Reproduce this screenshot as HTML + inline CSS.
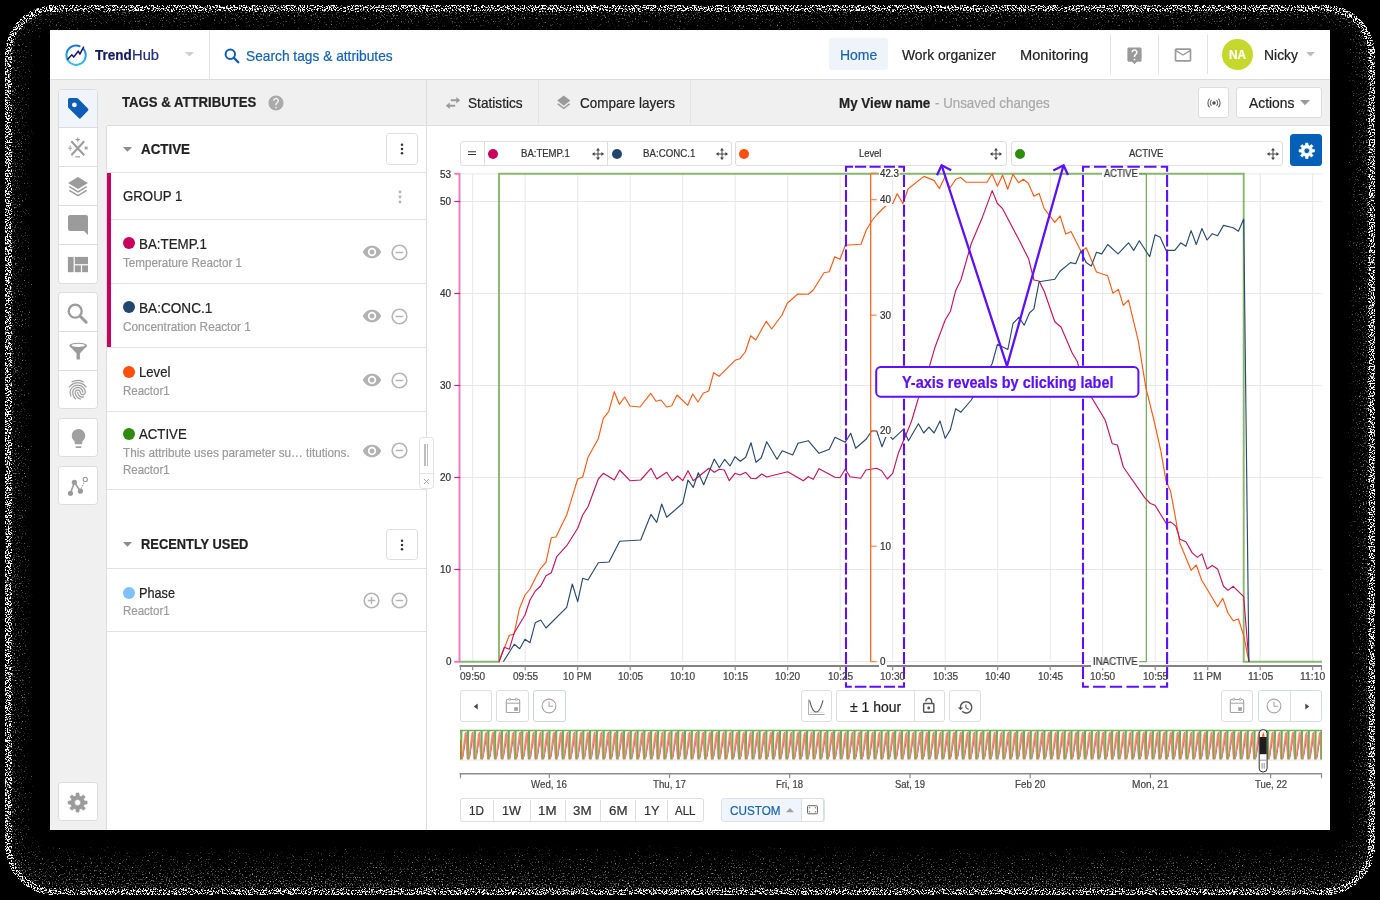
<!DOCTYPE html>
<html><head><meta charset="utf-8"><title>TrendHub</title><style>
html,body{margin:0;padding:0;background:#000;}
body{width:1380px;height:900px;overflow:hidden;position:relative;font-family:"Liberation Sans",sans-serif;}
.a{position:absolute;display:block;}
.t{position:absolute;white-space:nowrap;transform-origin:0 0;-webkit-text-stroke:0.22px currentColor;font-family:"Liberation Sans",sans-serif;}
.b{display:inline-block;width:0;height:0;}
#tx{position:absolute;left:0;top:0;width:1380px;height:900px;will-change:transform;}
</style></head><body>
<svg class="a" style="left:0.00px;top:0.00px" width="1380" height="900" viewBox="0 0 1380 900"><defs><filter id="sp1" x="0" y="0" width="1380" height="900" filterUnits="userSpaceOnUse" color-interpolation-filters="sRGB"><feTurbulence type="fractalNoise" baseFrequency="0.71" numOctaves="2" seed="7" result="t"/><feColorMatrix in="t" type="matrix" values="0 0 0 0 1  0 0 0 0 1  0 0 0 0 1  1 0 0 0 0" result="n"/><feComposite in="n" in2="SourceGraphic" operator="arithmetic" k1="0" k2="1" k3="1" k4="-1" result="c"/><feComponentTransfer in="c"><feFuncA type="linear" slope="12" intercept="0"/></feComponentTransfer></filter><filter id="sp2" x="0" y="0" width="1380" height="900" filterUnits="userSpaceOnUse" color-interpolation-filters="sRGB"><feTurbulence type="fractalNoise" baseFrequency="0.71" numOctaves="2" seed="7" result="t"/><feColorMatrix in="t" type="matrix" values="0 0 0 0 1  0 0 0 0 1  0 0 0 0 1  1 0 0 0 0" result="n"/><feComposite in="n" in2="SourceGraphic" operator="arithmetic" k1="0" k2="1" k3="1" k4="-1" result="c"/><feComponentTransfer in="c"><feFuncA type="linear" slope="2.3" intercept="0"/></feComponentTransfer></filter></defs><g filter="url(#sp1)"><path fill-rule="evenodd" fill="#fff" fill-opacity="0.569" d="M54.8 4.8H1325.2A50.0 50.0 0 0 1 1375.2 54.8V845.3A50.0 50.0 0 0 1 1325.2 895.3H54.8A50.0 50.0 0 0 1 4.8 845.3V54.8A50.0 50.0 0 0 1 54.8 4.8ZM54.8 5.8H1325.2A49.0 49.0 0 0 1 1374.2 54.8V845.3A49.0 49.0 0 0 1 1325.2 894.3H54.8A49.0 49.0 0 0 1 5.8 845.3V54.8A49.0 49.0 0 0 1 54.8 5.8Z"/><path fill-rule="evenodd" fill="#fff" fill-opacity="0.568" d="M54.8 5.8H1325.2A49.0 49.0 0 0 1 1374.2 54.8V845.3A49.0 49.0 0 0 1 1325.2 894.3H54.8A49.0 49.0 0 0 1 5.8 845.3V54.8A49.0 49.0 0 0 1 54.8 5.8ZM54.8 6.8H1325.2A48.0 48.0 0 0 1 1373.2 54.8V845.3A48.0 48.0 0 0 1 1325.2 893.3H54.8A48.0 48.0 0 0 1 6.8 845.3V54.8A48.0 48.0 0 0 1 54.8 6.8Z"/><path fill-rule="evenodd" fill="#fff" fill-opacity="0.566" d="M54.8 6.8H1325.2A48.0 48.0 0 0 1 1373.2 54.8V845.3A48.0 48.0 0 0 1 1325.2 893.3H54.8A48.0 48.0 0 0 1 6.8 845.3V54.8A48.0 48.0 0 0 1 54.8 6.8ZM54.8 7.8H1325.2A47.0 47.0 0 0 1 1372.2 54.8V845.3A47.0 47.0 0 0 1 1325.2 892.3H54.8A47.0 47.0 0 0 1 7.8 845.3V54.8A47.0 47.0 0 0 1 54.8 7.8Z"/><path fill-rule="evenodd" fill="#fff" fill-opacity="0.565" d="M54.8 7.8H1325.2A47.0 47.0 0 0 1 1372.2 54.8V845.3A47.0 47.0 0 0 1 1325.2 892.3H54.8A47.0 47.0 0 0 1 7.8 845.3V54.8A47.0 47.0 0 0 1 54.8 7.8ZM54.8 8.8H1325.2A46.0 46.0 0 0 1 1371.2 54.8V845.3A46.0 46.0 0 0 1 1325.2 891.3H54.8A46.0 46.0 0 0 1 8.8 845.3V54.8A46.0 46.0 0 0 1 54.8 8.8Z"/><path fill-rule="evenodd" fill="#fff" fill-opacity="0.563" d="M54.8 8.8H1325.2A46.0 46.0 0 0 1 1371.2 54.8V845.3A46.0 46.0 0 0 1 1325.2 891.3H54.8A46.0 46.0 0 0 1 8.8 845.3V54.8A46.0 46.0 0 0 1 54.8 8.8ZM54.8 9.8H1325.2A45.0 45.0 0 0 1 1370.2 54.8V845.3A45.0 45.0 0 0 1 1325.2 890.3H54.8A45.0 45.0 0 0 1 9.8 845.3V54.8A45.0 45.0 0 0 1 54.8 9.8Z"/><path fill-rule="evenodd" fill="#fff" fill-opacity="0.562" d="M54.8 9.8H1325.2A45.0 45.0 0 0 1 1370.2 54.8V845.3A45.0 45.0 0 0 1 1325.2 890.3H54.8A45.0 45.0 0 0 1 9.8 845.3V54.8A45.0 45.0 0 0 1 54.8 9.8ZM54.8 10.8H1325.2A44.0 44.0 0 0 1 1369.2 54.8V845.3A44.0 44.0 0 0 1 1325.2 889.3H54.8A44.0 44.0 0 0 1 10.8 845.3V54.8A44.0 44.0 0 0 1 54.8 10.8Z"/><path fill-rule="evenodd" fill="#fff" fill-opacity="0.561" d="M54.8 10.8H1325.2A44.0 44.0 0 0 1 1369.2 54.8V845.3A44.0 44.0 0 0 1 1325.2 889.3H54.8A44.0 44.0 0 0 1 10.8 845.3V54.8A44.0 44.0 0 0 1 54.8 10.8ZM54.8 11.8H1325.2A43.0 43.0 0 0 1 1368.2 54.8V845.3A43.0 43.0 0 0 1 1325.2 888.3H54.8A43.0 43.0 0 0 1 11.8 845.3V54.8A43.0 43.0 0 0 1 54.8 11.8Z"/></g><g filter="url(#sp2)"><path fill-rule="evenodd" fill="#fff" fill-opacity="0.513" d="M54.8 11.8H1325.2A43.0 43.0 0 0 1 1368.2 54.8V845.3A43.0 43.0 0 0 1 1325.2 888.3H54.8A43.0 43.0 0 0 1 11.8 845.3V54.8A43.0 43.0 0 0 1 54.8 11.8ZM54.8 12.8H1325.2A42.0 42.0 0 0 1 1367.2 54.8V844.3A42.0 42.0 0 0 1 1325.2 886.3H54.8A42.0 42.0 0 0 1 12.8 844.3V54.8A42.0 42.0 0 0 1 54.8 12.8Z"/><path fill-rule="evenodd" fill="#fff" fill-opacity="0.500" d="M54.8 12.8H1325.2A42.0 42.0 0 0 1 1367.2 54.8V844.3A42.0 42.0 0 0 1 1325.2 886.3H54.8A42.0 42.0 0 0 1 12.8 844.3V54.8A42.0 42.0 0 0 1 54.8 12.8ZM54.8 13.8H1325.2A41.0 41.0 0 0 1 1366.2 54.8V843.3A41.0 41.0 0 0 1 1325.2 884.3H54.8A41.0 41.0 0 0 1 13.8 843.3V54.8A41.0 41.0 0 0 1 54.8 13.8Z"/><path fill-rule="evenodd" fill="#fff" fill-opacity="0.487" d="M54.8 13.8H1325.2A41.0 41.0 0 0 1 1366.2 54.8V843.3A41.0 41.0 0 0 1 1325.2 884.3H54.8A41.0 41.0 0 0 1 13.8 843.3V54.8A41.0 41.0 0 0 1 54.8 13.8ZM54.8 14.8H1325.2A40.0 40.0 0 0 1 1365.2 54.8V842.3A40.0 40.0 0 0 1 1325.2 882.3H54.8A40.0 40.0 0 0 1 14.8 842.3V54.8A40.0 40.0 0 0 1 54.8 14.8Z"/><path fill-rule="evenodd" fill="#fff" fill-opacity="0.476" d="M54.8 14.8H1325.2A40.0 40.0 0 0 1 1365.2 54.8V842.3A40.0 40.0 0 0 1 1325.2 882.3H54.8A40.0 40.0 0 0 1 14.8 842.3V54.8A40.0 40.0 0 0 1 54.8 14.8ZM54.8 15.8H1325.2A39.0 39.0 0 0 1 1364.2 54.8V841.3A39.0 39.0 0 0 1 1325.2 880.3H54.8A39.0 39.0 0 0 1 15.8 841.3V54.8A39.0 39.0 0 0 1 54.8 15.8Z"/><path fill-rule="evenodd" fill="#fff" fill-opacity="0.467" d="M54.8 15.8H1325.2A39.0 39.0 0 0 1 1364.2 54.8V841.3A39.0 39.0 0 0 1 1325.2 880.3H54.8A39.0 39.0 0 0 1 15.8 841.3V54.8A39.0 39.0 0 0 1 54.8 15.8ZM54.8 16.8H1325.2A38.0 38.0 0 0 1 1363.2 54.8V840.3A38.0 38.0 0 0 1 1325.2 878.3H54.8A38.0 38.0 0 0 1 16.8 840.3V54.8A38.0 38.0 0 0 1 54.8 16.8Z"/><path fill-rule="evenodd" fill="#fff" fill-opacity="0.459" d="M54.8 16.8H1325.2A38.0 38.0 0 0 1 1363.2 54.8V840.3A38.0 38.0 0 0 1 1325.2 878.3H54.8A38.0 38.0 0 0 1 16.8 840.3V54.8A38.0 38.0 0 0 1 54.8 16.8ZM54.8 17.8H1325.2A37.0 37.0 0 0 1 1362.2 54.8V839.3A37.0 37.0 0 0 1 1325.2 876.3H54.8A37.0 37.0 0 0 1 17.8 839.3V54.8A37.0 37.0 0 0 1 54.8 17.8Z"/><path fill-rule="evenodd" fill="#fff" fill-opacity="0.451" d="M54.8 17.8H1325.2A37.0 37.0 0 0 1 1362.2 54.8V839.3A37.0 37.0 0 0 1 1325.2 876.3H54.8A37.0 37.0 0 0 1 17.8 839.3V54.8A37.0 37.0 0 0 1 54.8 17.8ZM54.8 18.8H1325.2A36.0 36.0 0 0 1 1361.2 54.8V838.3A36.0 36.0 0 0 1 1325.2 874.3H54.8A36.0 36.0 0 0 1 18.8 838.3V54.8A36.0 36.0 0 0 1 54.8 18.8Z"/><path fill-rule="evenodd" fill="#fff" fill-opacity="0.443" d="M54.8 18.8H1325.2A36.0 36.0 0 0 1 1361.2 54.8V838.3A36.0 36.0 0 0 1 1325.2 874.3H54.8A36.0 36.0 0 0 1 18.8 838.3V54.8A36.0 36.0 0 0 1 54.8 18.8ZM54.8 19.8H1325.2A35.0 35.0 0 0 1 1360.2 54.8V837.3A35.0 35.0 0 0 1 1325.2 872.3H54.8A35.0 35.0 0 0 1 19.8 837.3V54.8A35.0 35.0 0 0 1 54.8 19.8Z"/><path fill-rule="evenodd" fill="#fff" fill-opacity="0.434" d="M54.8 19.8H1325.2A35.0 35.0 0 0 1 1360.2 54.8V837.3A35.0 35.0 0 0 1 1325.2 872.3H54.8A35.0 35.0 0 0 1 19.8 837.3V54.8A35.0 35.0 0 0 1 54.8 19.8ZM54.8 20.8H1325.2A34.0 34.0 0 0 1 1359.2 54.8V836.3A34.0 34.0 0 0 1 1325.2 870.3H54.8A34.0 34.0 0 0 1 20.8 836.3V54.8A34.0 34.0 0 0 1 54.8 20.8Z"/><path fill-rule="evenodd" fill="#fff" fill-opacity="0.426" d="M54.8 20.8H1325.2A34.0 34.0 0 0 1 1359.2 54.8V836.3A34.0 34.0 0 0 1 1325.2 870.3H54.8A34.0 34.0 0 0 1 20.8 836.3V54.8A34.0 34.0 0 0 1 54.8 20.8ZM54.8 21.8H1325.2A33.0 33.0 0 0 1 1358.2 54.8V835.3A33.0 33.0 0 0 1 1325.2 868.3H54.8A33.0 33.0 0 0 1 21.8 835.3V54.8A33.0 33.0 0 0 1 54.8 21.8Z"/><path fill-rule="evenodd" fill="#fff" fill-opacity="0.417" d="M54.8 21.8H1325.2A33.0 33.0 0 0 1 1358.2 54.8V835.3A33.0 33.0 0 0 1 1325.2 868.3H54.8A33.0 33.0 0 0 1 21.8 835.3V54.8A33.0 33.0 0 0 1 54.8 21.8ZM54.8 22.8H1325.2A32.0 32.0 0 0 1 1357.2 54.8V834.3A32.0 32.0 0 0 1 1325.2 866.3H54.8A32.0 32.0 0 0 1 22.8 834.3V54.8A32.0 32.0 0 0 1 54.8 22.8Z"/><path fill-rule="evenodd" fill="#fff" fill-opacity="0.409" d="M54.8 22.8H1325.2A32.0 32.0 0 0 1 1357.2 54.8V834.3A32.0 32.0 0 0 1 1325.2 866.3H54.8A32.0 32.0 0 0 1 22.8 834.3V54.8A32.0 32.0 0 0 1 54.8 22.8ZM54.8 23.8H1325.2A31.0 31.0 0 0 1 1356.2 54.8V833.3A31.0 31.0 0 0 1 1325.2 864.3H54.8A31.0 31.0 0 0 1 23.8 833.3V54.8A31.0 31.0 0 0 1 54.8 23.8Z"/><path fill-rule="evenodd" fill="#fff" fill-opacity="0.401" d="M54.8 23.8H1325.2A31.0 31.0 0 0 1 1356.2 54.8V833.3A31.0 31.0 0 0 1 1325.2 864.3H54.8A31.0 31.0 0 0 1 23.8 833.3V54.8A31.0 31.0 0 0 1 54.8 23.8ZM54.8 24.8H1325.2A30.0 30.0 0 0 1 1355.2 54.8V832.3A30.0 30.0 0 0 1 1325.2 862.3H54.8A30.0 30.0 0 0 1 24.8 832.3V54.8A30.0 30.0 0 0 1 54.8 24.8Z"/><path fill-rule="evenodd" fill="#fff" fill-opacity="0.393" d="M54.8 24.8H1325.2A30.0 30.0 0 0 1 1355.2 54.8V832.3A30.0 30.0 0 0 1 1325.2 862.3H54.8A30.0 30.0 0 0 1 24.8 832.3V54.8A30.0 30.0 0 0 1 54.8 24.8ZM54.8 25.8H1325.2A29.0 29.0 0 0 1 1354.2 54.8V831.3A29.0 29.0 0 0 1 1325.2 860.3H54.8A29.0 29.0 0 0 1 25.8 831.3V54.8A29.0 29.0 0 0 1 54.8 25.8Z"/><path fill-rule="evenodd" fill="#fff" fill-opacity="0.384" d="M54.8 25.8H1325.2A29.0 29.0 0 0 1 1354.2 54.8V831.3A29.0 29.0 0 0 1 1325.2 860.3H54.8A29.0 29.0 0 0 1 25.8 831.3V54.8A29.0 29.0 0 0 1 54.8 25.8ZM54.8 26.8H1325.2A28.0 28.0 0 0 1 1353.2 54.8V830.3A28.0 28.0 0 0 1 1325.2 858.3H54.8A28.0 28.0 0 0 1 26.8 830.3V54.8A28.0 28.0 0 0 1 54.8 26.8Z"/><path fill-rule="evenodd" fill="#fff" fill-opacity="0.373" d="M54.8 26.8H1325.2A28.0 28.0 0 0 1 1353.2 54.8V830.3A28.0 28.0 0 0 1 1325.2 858.3H54.8A28.0 28.0 0 0 1 26.8 830.3V54.8A28.0 28.0 0 0 1 54.8 26.8ZM54.8 27.8H1325.2A27.0 27.0 0 0 1 1352.2 54.8V829.3A27.0 27.0 0 0 1 1325.2 856.3H54.8A27.0 27.0 0 0 1 27.8 829.3V54.8A27.0 27.0 0 0 1 54.8 27.8Z"/><path fill-rule="evenodd" fill="#fff" fill-opacity="0.360" d="M54.8 27.8H1325.2A27.0 27.0 0 0 1 1352.2 54.8V829.3A27.0 27.0 0 0 1 1325.2 856.3H54.8A27.0 27.0 0 0 1 27.8 829.3V54.8A27.0 27.0 0 0 1 54.8 27.8ZM54.8 28.8H1325.2A26.0 26.0 0 0 1 1351.2 54.8V828.3A26.0 26.0 0 0 1 1325.2 854.3H54.8A26.0 26.0 0 0 1 28.8 828.3V54.8A26.0 26.0 0 0 1 54.8 28.8Z"/><path fill-rule="evenodd" fill="#fff" fill-opacity="0.347" d="M54.8 28.8H1325.2A26.0 26.0 0 0 1 1351.2 54.8V828.3A26.0 26.0 0 0 1 1325.2 854.3H54.8A26.0 26.0 0 0 1 28.8 828.3V54.8A26.0 26.0 0 0 1 54.8 28.8ZM54.8 29.8H1325.2A25.0 25.0 0 0 1 1350.2 54.8V827.3A25.0 25.0 0 0 1 1325.2 852.3H54.8A25.0 25.0 0 0 1 29.8 827.3V54.8A25.0 25.0 0 0 1 54.8 29.8Z"/><path fill-rule="evenodd" fill="#fff" fill-opacity="0.333" d="M54.8 29.8H1325.2A25.0 25.0 0 0 1 1350.2 54.8V827.3A25.0 25.0 0 0 1 1325.2 852.3H54.8A25.0 25.0 0 0 1 29.8 827.3V54.8A25.0 25.0 0 0 1 54.8 29.8ZM54.8 30.8H1325.2A24.0 24.0 0 0 1 1349.2 54.8V826.3A24.0 24.0 0 0 1 1325.2 850.3H54.8A24.0 24.0 0 0 1 30.8 826.3V54.8A24.0 24.0 0 0 1 54.8 30.8Z"/><path fill-rule="evenodd" fill="#fff" fill-opacity="0.320" d="M54.8 30.8H1325.2A24.0 24.0 0 0 1 1349.2 54.8V826.3A24.0 24.0 0 0 1 1325.2 850.3H54.8A24.0 24.0 0 0 1 30.8 826.3V54.8A24.0 24.0 0 0 1 54.8 30.8ZM54.8 31.8H1325.2A23.0 23.0 0 0 1 1348.2 54.8V825.3A23.0 23.0 0 0 1 1325.2 848.3H54.8A23.0 23.0 0 0 1 31.8 825.3V54.8A23.0 23.0 0 0 1 54.8 31.8Z"/><path fill-rule="evenodd" fill="#fff" fill-opacity="0.307" d="M54.8 31.8H1325.2A23.0 23.0 0 0 1 1348.2 54.8V825.3A23.0 23.0 0 0 1 1325.2 848.3H54.8A23.0 23.0 0 0 1 31.8 825.3V54.8A23.0 23.0 0 0 1 54.8 31.8ZM54.8 32.8H1325.2A22.0 22.0 0 0 1 1347.2 54.8V824.3A22.0 22.0 0 0 1 1325.2 846.3H54.8A22.0 22.0 0 0 1 32.8 824.3V54.8A22.0 22.0 0 0 1 54.8 32.8Z"/></g></svg>
<div class="a" style="left:50.00px;top:30.00px;width:1280.00px;height:800.00px;background:#ffffff;"></div>
<div class="a" style="left:50.00px;top:80.00px;width:377.00px;height:750.00px;background:#f0f0f0;"></div>
<div class="a" style="left:427.00px;top:80.00px;width:903.00px;height:45.50px;background:#f0f0f0;"></div>
<div class="a" style="left:107.00px;top:126.00px;width:319.50px;height:704.00px;background:#ffffff;"></div>
<div class="a" style="left:50.00px;top:79.00px;width:1280.00px;height:1px;background:#dcdcdc"></div>
<div class="a" style="left:209.00px;top:30.00px;width:1px;height:49.50px;background:#e2e2e2"></div>
<div class="a" style="left:107.00px;top:125.00px;width:1223.00px;height:1px;background:#dcdcdc"></div>
<div class="a" style="left:106.30px;top:126.00px;width:1px;height:704.00px;background:#dcdcdc"></div>
<div class="a" style="left:426.30px;top:80.00px;width:1px;height:750.00px;background:#dcdcdc"></div>
<div class="a" style="left:537.50px;top:80.00px;width:1px;height:45.50px;background:#e4e4e4"></div>
<div class="a" style="left:689.50px;top:80.00px;width:1px;height:45.50px;background:#e4e4e4"></div>
<svg class="a" style="left:62.40px;top:41.50px" width="27" height="27" viewBox="0 0 28 28"><defs><linearGradient id="lg" x1="0" y1="0" x2="0" y2="1"><stop offset="0" stop-color="#1b75d0"/><stop offset="1" stop-color="#2fc0ea"/></linearGradient></defs>
<path d="M22.2 7.2 A10 10 0 1 1 18.3 4.4" fill="none" stroke="url(#lg)" stroke-width="2.1" stroke-linecap="round"/>
<path d="M5.6 18.2 L10.2 13.2 L12.2 15.6 L16.8 9.6 L18.6 12.4 L22.6 4.8" fill="none" stroke="#1b1464" stroke-width="1.5" stroke-linejoin="miter"/></svg>
<svg class="a" style="left:184.50px;top:52.00px" width="9" height="5" viewBox="0 0 9 5"><path d="M0 0H9L4.5 4.6z" fill="#cfcfcf"/></svg>
<svg class="a" style="left:224.20px;top:47.60px" width="16" height="16" viewBox="0 0 16 16"><circle cx="6.300" cy="6.300" r="4.700" fill="none" stroke="#0d5cb6" stroke-width="2"/><path d="M9.900 9.900L14.300 14.300" stroke="#0d5cb6" stroke-width="2.300" stroke-linecap="round"/></svg>
<div class="a" style="left:829.00px;top:38.30px;width:59.30px;height:31.70px;background:#eff4fb;border-radius:3px;"></div>
<div class="a" style="left:1110.20px;top:34.60px;width:1px;height:39.40px;background:#e2e2e2"></div>
<div class="a" style="left:1158.10px;top:34.60px;width:1px;height:39.40px;background:#e2e2e2"></div>
<div class="a" style="left:1207.10px;top:34.60px;width:1px;height:39.40px;background:#e2e2e2"></div>
<svg class="a" style="left:1125.00px;top:45.70px" width="19" height="19" viewBox="0 0 24 24"><path fill="#9a9a9a"  d="M19 2H5c-1.11 0-2 .9-2 2v14c0 1.1.89 2 2 2h4l3 3 3-3h4c1.1 0 2-.9 2-2V4c0-1.1-.9-2-2-2zm-6 16h-2v-2h2v2zm2.07-7.75l-.9.92C13.45 11.9 13 12.5 13 14h-2v-.5c0-1.1.45-2.1 1.17-2.83l1.24-1.26c.37-.36.59-.86.59-1.41 0-1.1-.9-2-2-2s-2 .9-2 2H8c0-2.21 1.79-4 4-4s4 1.79 4 4c0 .88-.36 1.68-.93 2.25z"/></svg>
<svg class="a" style="left:1173.20px;top:44.60px" width="20" height="20" viewBox="0 0 24 24"><path fill="#9a9a9a"  d="M20 4H4c-1.1 0-1.99.9-1.99 2L2 18c0 1.1.9 2 2 2h16c1.1 0 2-.9 2-2V6c0-1.1-.9-2-2-2zm0 14H4V8l8 5 8-5v10zm-8-7L4 6h16l-8 5z"/></svg>
<div class="a" style="left:1222.40px;top:39.10px;width:30.60px;height:30.60px;border-radius:50%;background:#c5d92d"></div>
<svg class="a" style="left:1305.70px;top:52.40px" width="9" height="5" viewBox="0 0 9 5"><path d="M0 0H9L4.5 4.6z" fill="#bdbdbd"/></svg>
<svg class="a" style="left:444.50px;top:95.50px" width="16" height="14" viewBox="0 0 16 14"><path d="M15.200 4.200L11.300 .9V3.200H5.800V5.200H11.300V7.500zM.8 9.800L4.700 6.500V8.800H10.200V10.800H4.700V13.100z" fill="#9a9a9a"/></svg>
<svg class="a" style="left:554.55px;top:93.55px" width="17.5" height="17.5" viewBox="0 0 24 24"><path fill="#9a9a9a"  d="M11.99 18.54l-7.37-5.73L3 14.07l9 7 9-7-1.63-1.27-7.38 5.74zM12 16l7.36-5.73L21 9l-9-7-9 7 1.63 1.27L12 16z"/></svg>
<div class="a" style="left:1198.30px;top:86.90px;width:30.50px;height:31.10px;background:#ffffff;border:1px solid #dddddd;box-sizing:border-box;border-radius:3px;"></div>
<svg class="a" style="left:1205.50px;top:96.50px" width="16" height="12" viewBox="0 0 16 12"><circle cx="8" cy="6" r="1.800" fill="#555"/>
<path d="M5.500 3.200 A4 4 0 0 0 5.500 8.800 M10.500 3.200 A4 4 0 0 1 10.500 8.800" fill="none" stroke="#666" stroke-width="1.150"/>
<path d="M3.600 1.700 A6.300 6.300 0 0 0 3.600 10.300 M12.400 1.700 A6.300 6.300 0 0 1 12.400 10.300" fill="none" stroke="#666" stroke-width="1.150"/></svg>
<div class="a" style="left:1236.00px;top:86.90px;width:85.50px;height:31.10px;background:#ffffff;border:1px solid #dddddd;box-sizing:border-box;border-radius:3px;"></div>
<svg class="a" style="left:1300.00px;top:100.20px" width="10" height="5.5" viewBox="0 0 10 5.5"><path d="M0 0H10L5 5.2z" fill="#9a9a9a"/></svg>
<div class="a" style="left:58.20px;top:88.60px;width:39.40px;height:195.00px;background:#ffffff;border:1px solid #dcdcdc;box-sizing:border-box;border-radius:3.5px;"></div>
<div class="a" style="left:59.00px;top:127.10px;width:38.00px;height:1px;background:#dcdcdc"></div>
<div class="a" style="left:59.00px;top:166.10px;width:38.00px;height:1px;background:#dcdcdc"></div>
<div class="a" style="left:59.00px;top:205.10px;width:38.00px;height:1px;background:#dcdcdc"></div>
<div class="a" style="left:59.00px;top:244.10px;width:38.00px;height:1px;background:#dcdcdc"></div>
<div class="a" style="left:59.20px;top:89.60px;width:37.40px;height:37.60px;background:#f0f5fb;border-radius:2.5px;"></div>
<div class="a" style="left:58.20px;top:292.00px;width:39.40px;height:117.30px;background:#ffffff;border:1px solid #dcdcdc;box-sizing:border-box;border-radius:3.5px;"></div>
<div class="a" style="left:59.00px;top:330.60px;width:38.00px;height:1px;background:#dcdcdc"></div>
<div class="a" style="left:59.00px;top:369.70px;width:38.00px;height:1px;background:#dcdcdc"></div>
<div class="a" style="left:58.20px;top:418.30px;width:39.40px;height:39.20px;background:#ffffff;border:1px solid #dcdcdc;box-sizing:border-box;border-radius:3.5px;"></div>
<div class="a" style="left:58.20px;top:466.30px;width:39.40px;height:39.10px;background:#ffffff;border:1px solid #dcdcdc;box-sizing:border-box;border-radius:3.5px;"></div>
<div class="a" style="left:58.20px;top:782.30px;width:39.40px;height:39.20px;background:#ffffff;border:1px solid #dcdcdc;box-sizing:border-box;border-radius:3.5px;"></div>
<svg class="a" style="left:68.00px;top:98.00px" width="22" height="22" viewBox="0 0 22 22"><path fill-rule="evenodd" fill="#0d5cb6" d="M1.600 0H8.600Q9.400 0 10 .6L19.900 10.500Q21 11.600 19.900 12.800L12.900 20.100Q11.800 21.200 10.700 20.100L.6 10Q0 9.400 0 8.600V1.600Q0 0 1.600 0zM6.400 4.500A2.400 2.400 0 1 0 6.400 9.300A2.400 2.400 0 1 0 6.400 4.500z"/></svg>
<svg class="a" style="left:66.20px;top:135.00px" width="24" height="25" viewBox="0 0 24 25"><g stroke="#9b9b9b" fill="none" stroke-width="2" stroke-linecap="butt"><path d="M5.300 6.300L18.200 20.200M18.200 6.300L5.300 20.200"/></g>
<g stroke="#9b9b9b" stroke-width="1.250" fill="none"><path d="M11.800 2.600v4.200M9.700 4.700h4.200M9.400 21.800h4.600M2.300 13.200h3.600M18.800 11.600l2.700 2.700M21.500 11.600L18.800 14.300"/></g><circle cx="4.100" cy="11.300" r=".75" fill="#9b9b9b"/><circle cx="4.100" cy="15.100" r=".75" fill="#9b9b9b"/></svg>
<svg class="a" style="left:66.90px;top:176.00px" width="22" height="22" viewBox="0 0 22 22"><path d="M11 1L21 7L11 13L1 7z" fill="#9b9b9b"/><path d="M2.300 10.700L11 15.900L19.700 10.700M2.300 14.400L11 19.600L19.700 14.400" fill="none" stroke="#9b9b9b" stroke-width="1.500"/></svg>
<svg class="a" style="left:65.90px;top:213.20px" width="24" height="24" viewBox="0 0 24 24"><path fill="#9b9b9b"  d="M21.99 4c0-1.1-.89-2-1.99-2H4c-1.1 0-2 .9-2 2v12c0 1.1.9 2 2 2h14l4 4-.01-18z"/></svg>
<svg class="a" style="left:67.00px;top:256.00px" width="22" height="17" viewBox="0 0 22 17"><rect x=".9" y=".9" width="5.700" height="15.300" fill="#9b9b9b"/><rect x="7.800" y=".9" width="13.200" height="7.300" fill="#9b9b9b"/><rect x="7.800" y="9.400" width="6.100" height="6.800" fill="#9b9b9b"/><rect x="15.100" y="9.400" width="5.900" height="6.800" fill="#9b9b9b"/></svg>
<svg class="a" style="left:65.90px;top:301.50px" width="23" height="23" viewBox="0 0 23 23"><circle cx="9.200" cy="9.200" r="6.500" fill="none" stroke="#9b9b9b" stroke-width="2.300"/><path d="M14.200 14.200L20.200 20.200" stroke="#9b9b9b" stroke-width="3" stroke-linecap="round"/></svg>
<svg class="a" style="left:67.20px;top:340.60px" width="23" height="22" viewBox="0 0 23 22"><path d="M2.400 4.800L9.500 12.600V18.400H12.900V12.600L20 4.800z" fill="#9b9b9b"/><ellipse cx="11.200" cy="4.700" rx="8.800" ry="3" fill="#9b9b9b"/><ellipse cx="11.200" cy="4.400" rx="6.700" ry="1.550" fill="#ffffff"/></svg>
<svg class="a" style="left:66.15px;top:378.25px" width="23.5" height="23.5" viewBox="0 0 24 24"><path fill="#9b9b9b" stroke="#9b9b9b" stroke-width=".25" d="M17.81 4.47c-.08 0-.16-.02-.23-.06C15.66 3.42 14 3 12.01 3c-1.98 0-3.86.47-5.57 1.41-.24.13-.54.04-.68-.2-.13-.24-.04-.55.2-.68C7.82 2.52 9.86 2 12.01 2c2.13 0 3.99.47 6.03 1.52.25.13.34.43.21.67-.09.18-.26.28-.44.28zM3.5 9.72c-.1 0-.2-.03-.29-.09-.23-.16-.28-.47-.12-.7.99-1.4 2.25-2.5 3.75-3.27C9.98 4.04 14 4.03 17.15 5.65c1.5.77 2.76 1.86 3.75 3.25.16.22.11.54-.12.7-.23.16-.54.11-.7-.12-.9-1.26-2.04-2.25-3.39-2.94-2.87-1.47-6.54-1.47-9.4.01-1.36.7-2.5 1.7-3.4 2.96-.08.14-.23.21-.39.21zm6.25 12.07c-.13 0-.26-.05-.35-.15-.87-.87-1.34-1.43-2.01-2.64-.69-1.23-1.05-2.73-1.05-4.34 0-2.97 2.54-5.39 5.66-5.39s5.66 2.42 5.66 5.39c0 .28-.22.5-.5.5s-.5-.22-.5-.5c0-2.42-2.09-4.39-4.66-4.39-2.57 0-4.66 1.97-4.66 4.39 0 1.44.32 2.77.93 3.85.64 1.15 1.08 1.64 1.85 2.42.19.2.19.51 0 .71-.11.1-.24.15-.37.15zm7.17-1.85c-1.19 0-2.24-.3-3.1-.89-1.49-1.01-2.38-2.65-2.38-4.39 0-.28.22-.5.5-.5s.5.22.5.5c0 1.41.72 2.74 1.94 3.56.71.48 1.54.71 2.54.71.24 0 .64-.03 1.04-.1.27-.05.53.13.58.41.05.27-.13.53-.41.58-.57.11-1.07.12-1.21.12zM14.91 22c-.04 0-.09-.01-.13-.02-1.59-.44-2.63-1.03-3.72-2.1-1.4-1.39-2.17-3.24-2.17-5.22 0-1.62 1.38-2.94 3.08-2.94 1.7 0 3.08 1.32 3.08 2.94 0 1.07.93 1.94 2.08 1.94s2.08-.87 2.08-1.94c0-3.77-3.25-6.83-7.25-6.83-2.84 0-5.44 1.58-6.61 4.03-.39.81-.59 1.76-.59 2.8 0 .78.07 2.01.67 3.61.1.26-.03.55-.29.64-.26.1-.55-.04-.64-.29-.49-1.31-.73-2.61-.73-3.96 0-1.2.23-2.29.68-3.24 1.33-2.79 4.28-4.6 7.51-4.6 4.55 0 8.25 3.51 8.25 7.83 0 1.62-1.38 2.94-3.08 2.94s-3.08-1.32-3.08-2.94c0-1.07-.93-1.94-2.08-1.94s-2.08.87-2.08 1.94c0 1.71.66 3.31 1.87 4.51.95.94 1.86 1.46 3.27 1.85.27.07.42.35.35.61-.05.23-.26.38-.47.38z"/></svg>
<svg class="a" style="left:66.70px;top:426.80px" width="23" height="23" viewBox="0 0 24 24"><path fill="#a0a0a0"  d="M9 21c0 .55.45 1 1 1h4c.55 0 1-.45 1-1v-1H9v1zm3-19C8.14 2 5 5.14 5 9c0 2.38 1.19 4.47 3 5.74V17c0 .55.45 1 1 1h6c.55 0 1-.45 1-1v-2.26c1.81-1.27 3-3.36 3-5.74 0-3.86-3.14-7-7-7z"/></svg>
<svg class="a" style="left:65.40px;top:473.00px" width="26" height="26" viewBox="0 0 26 26"><g fill="#9b9b9b"><circle cx="5.500" cy="20.300" r="2.600"/><circle cx="9.400" cy="9.300" r="2.600"/><circle cx="15.400" cy="18.200" r="2.600"/></g>
<path d="M5.500 20.300L9.400 9.300L15.400 18.200" stroke="#9b9b9b" stroke-width="1.600" fill="none"/>
<circle cx="20.300" cy="6.400" r="2.100" fill="#fff" stroke="#9b9b9b" stroke-width="1.100"/><path d="M16.400 15.700L19.300 8.800" stroke="#9b9b9b" stroke-width="1.100" stroke-dasharray="1.300 1.300"/></svg>
<svg class="a" style="left:67.30px;top:791.70px" width="21.2" height="21.2" viewBox="0 0 21.2 21.2"><path fill-rule="evenodd" fill="#9b9b9b" stroke="#9b9b9b" stroke-width=".7" stroke-linejoin="round" d="M8.99 3.88L9.18 1.11L12.02 1.11L12.21 3.88L14.21 4.71L16.31 2.88L18.32 4.89L16.49 6.99L17.32 8.99L20.09 9.18L20.09 12.02L17.32 12.21L16.49 14.21L18.32 16.31L16.31 18.32L14.21 16.49L12.21 17.32L12.02 20.09L9.18 20.09L8.99 17.32L6.99 16.49L4.89 18.32L2.88 16.31L4.71 14.21L3.88 12.21L1.11 12.02L1.11 9.18L3.88 8.99L4.71 6.99L2.88 4.89L4.89 2.88L6.99 4.71ZM7.50 10.60A3.10 3.10 0 1 0 13.70 10.60A3.10 3.10 0 1 0 7.50 10.60Z"/></svg>
<svg class="a" style="left:267.00px;top:93.70px" width="18" height="18" viewBox="0 0 24 24"><path fill="#aaaaaa"  d="M12 2C6.48 2 2 6.48 2 12s4.48 10 10 10 10-4.48 10-10S17.52 2 12 2zm1 17h-2v-2h2v2zm2.07-7.75l-.9.92C13.45 12.9 13 13.5 13 15h-2v-.5c0-1.1.45-2.1 1.17-2.83l1.24-1.26c.37-.36.59-.86.59-1.41 0-1.1-.9-2-2-2s-2 .9-2 2H8c0-2.21 1.79-4 4-4s4 1.79 4 4c0 .88-.36 1.68-.93 2.25z"/></svg>
<svg class="a" style="left:123.30px;top:146.50px" width="9" height="5" viewBox="0 0 9 5"><path d="M0 0H9L4.5 4.800z" fill="#8a8a8a"/></svg>
<div class="a" style="left:386.00px;top:132.90px;width:31.80px;height:31.70px;background:#ffffff;border:1px solid #dddddd;box-sizing:border-box;border-radius:3.5px;"></div>
<svg class="a" style="left:399.20px;top:141.30px" width="6" height="16" viewBox="0 0 6 16"><circle cx="3" cy="3.8" r="1.25" fill="#333333"/><circle cx="3" cy="8.0" r="1.25" fill="#333333"/><circle cx="3" cy="12.2" r="1.25" fill="#333333"/></svg>
<div class="a" style="left:107.00px;top:172.20px;width:319.50px;height:1px;background:#e2e2e2"></div>
<div class="a" style="left:107.00px;top:172.70px;width:4.20px;height:175.00px;background:#c8005f;"></div>
<svg class="a" style="left:397.00px;top:189.30px" width="6" height="16" viewBox="0 0 6 16"><circle cx="3" cy="3" r="1.4" fill="#b5b5b5"/><circle cx="3" cy="8" r="1.4" fill="#b5b5b5"/><circle cx="3" cy="13" r="1.4" fill="#b5b5b5"/></svg>
<div class="a" style="left:111.00px;top:218.80px;width:315.50px;height:1px;background:#e2e2e2"></div>
<div class="a" style="left:123.20px;top:237.30px;width:12.00px;height:12.00px;border-radius:50%;background:#c8005f"></div>
<svg class="a" style="left:362.00px;top:242.30px" width="20" height="20" viewBox="0 0 24 24"><path fill="#b2b2b2"  d="M12 4.5C7 4.5 2.73 7.61 1 12c1.73 4.39 6 7.5 11 7.5s9.27-3.11 11-7.5c-1.73-4.39-6-7.5-11-7.5zM12 17c-2.76 0-5-2.24-5-5s2.24-5 5-5 5 2.24 5 5-2.24 5-5 5zm0-8c-1.66 0-3 1.34-3 3s1.34 3 3 3 3-1.34 3-3-1.34-3-3-3z"/></svg>
<svg class="a" style="left:390.10px;top:242.70px" width="19" height="19" viewBox="0 0 19 19"><circle cx="9.500" cy="9.500" r="7.300" fill="none" stroke="#b4b4b4" stroke-width="1.600"/><path d="M5.700 9.500H13.300" stroke="#b4b4b4" stroke-width="1.500"/></svg>
<div class="a" style="left:111.00px;top:282.80px;width:315.50px;height:1px;background:#e2e2e2"></div>
<div class="a" style="left:123.20px;top:301.30px;width:12.00px;height:12.00px;border-radius:50%;background:#24466e"></div>
<svg class="a" style="left:362.00px;top:306.30px" width="20" height="20" viewBox="0 0 24 24"><path fill="#b2b2b2"  d="M12 4.5C7 4.5 2.73 7.61 1 12c1.73 4.39 6 7.5 11 7.5s9.27-3.11 11-7.5c-1.73-4.39-6-7.5-11-7.5zM12 17c-2.76 0-5-2.24-5-5s2.24-5 5-5 5 2.24 5 5-2.24 5-5 5zm0-8c-1.66 0-3 1.34-3 3s1.34 3 3 3 3-1.34 3-3-1.34-3-3-3z"/></svg>
<svg class="a" style="left:390.10px;top:306.70px" width="19" height="19" viewBox="0 0 19 19"><circle cx="9.500" cy="9.500" r="7.300" fill="none" stroke="#b4b4b4" stroke-width="1.600"/><path d="M5.700 9.500H13.300" stroke="#b4b4b4" stroke-width="1.500"/></svg>
<div class="a" style="left:107.00px;top:347.00px;width:319.50px;height:1px;background:#e2e2e2"></div>
<div class="a" style="left:123.20px;top:365.70px;width:12.00px;height:12.00px;border-radius:50%;background:#ff4f0a"></div>
<svg class="a" style="left:362.00px;top:370.30px" width="20" height="20" viewBox="0 0 24 24"><path fill="#b2b2b2"  d="M12 4.5C7 4.5 2.73 7.61 1 12c1.73 4.39 6 7.5 11 7.5s9.27-3.11 11-7.5c-1.73-4.39-6-7.5-11-7.5zM12 17c-2.76 0-5-2.24-5-5s2.24-5 5-5 5 2.24 5 5-2.24 5-5 5zm0-8c-1.66 0-3 1.34-3 3s1.34 3 3 3 3-1.34 3-3-1.34-3-3-3z"/></svg>
<svg class="a" style="left:390.10px;top:370.70px" width="19" height="19" viewBox="0 0 19 19"><circle cx="9.500" cy="9.500" r="7.300" fill="none" stroke="#b4b4b4" stroke-width="1.600"/><path d="M5.700 9.500H13.300" stroke="#b4b4b4" stroke-width="1.500"/></svg>
<div class="a" style="left:107.00px;top:410.50px;width:319.50px;height:1px;background:#e2e2e2"></div>
<div class="a" style="left:123.20px;top:428.00px;width:12.00px;height:12.00px;border-radius:50%;background:#2e8b0e"></div>
<svg class="a" style="left:362.00px;top:440.60px" width="20" height="20" viewBox="0 0 24 24"><path fill="#b2b2b2"  d="M12 4.5C7 4.5 2.73 7.61 1 12c1.73 4.39 6 7.5 11 7.5s9.27-3.11 11-7.5c-1.73-4.39-6-7.5-11-7.5zM12 17c-2.76 0-5-2.24-5-5s2.24-5 5-5 5 2.24 5 5-2.24 5-5 5zm0-8c-1.66 0-3 1.34-3 3s1.34 3 3 3 3-1.34 3-3-1.34-3-3-3z"/></svg>
<svg class="a" style="left:390.10px;top:441.00px" width="19" height="19" viewBox="0 0 19 19"><circle cx="9.500" cy="9.500" r="7.300" fill="none" stroke="#b4b4b4" stroke-width="1.600"/><path d="M5.700 9.500H13.300" stroke="#b4b4b4" stroke-width="1.500"/></svg>
<div class="a" style="left:107.00px;top:488.50px;width:319.50px;height:1px;background:#e2e2e2"></div>
<svg class="a" style="left:123.30px;top:541.80px" width="9" height="5" viewBox="0 0 9 5"><path d="M0 0H9L4.5 4.800z" fill="#8a8a8a"/></svg>
<div class="a" style="left:386.00px;top:528.60px;width:31.80px;height:31.70px;background:#ffffff;border:1px solid #dddddd;box-sizing:border-box;border-radius:3.5px;"></div>
<svg class="a" style="left:399.20px;top:537.00px" width="6" height="16" viewBox="0 0 6 16"><circle cx="3" cy="3.8" r="1.25" fill="#333333"/><circle cx="3" cy="8.0" r="1.25" fill="#333333"/><circle cx="3" cy="12.2" r="1.25" fill="#333333"/></svg>
<div class="a" style="left:107.00px;top:567.50px;width:319.50px;height:1px;background:#e2e2e2"></div>
<div class="a" style="left:123.20px;top:586.70px;width:12.00px;height:12.00px;border-radius:50%;background:#7fc0ff"></div>
<svg class="a" style="left:362.10px;top:591.00px" width="19" height="19" viewBox="0 0 19 19"><circle cx="9.500" cy="9.500" r="7.300" fill="none" stroke="#b4b4b4" stroke-width="1.600"/><path d="M5.700 9.500H13.300" stroke="#b4b4b4" stroke-width="1.500"/><path d="M9.500 5.700V13.300" stroke="#b4b4b4" stroke-width="1.500"/></svg>
<svg class="a" style="left:390.10px;top:591.00px" width="19" height="19" viewBox="0 0 19 19"><circle cx="9.500" cy="9.500" r="7.300" fill="none" stroke="#b4b4b4" stroke-width="1.600"/><path d="M5.700 9.500H13.300" stroke="#b4b4b4" stroke-width="1.500"/></svg>
<div class="a" style="left:107.00px;top:630.80px;width:319.50px;height:1px;background:#e2e2e2"></div>
<div class="a" style="left:418.60px;top:437.30px;width:15.60px;height:51.40px;background:#ffffff;border:1px solid #e2e2e2;box-sizing:border-box;border-radius:3.5px;"></div>
<div class="a" style="left:419.50px;top:472.90px;width:14.00px;height:1px;background:#e2e2e2"></div>
<div class="a" style="left:424.15px;top:444.20px;width:1.7px;height:21.60px;background:#bdbdbd"></div>
<div class="a" style="left:426.75px;top:444.20px;width:1.7px;height:21.60px;background:#bdbdbd"></div>
<svg class="a" style="left:423.00px;top:477.60px" width="7" height="7" viewBox="0 0 7 7"><path d="M1 1L6 6M6 1L1 6" stroke="#999" stroke-width=".9"/></svg>
<div class="a" style="left:460.00px;top:141.20px;width:271.70px;height:24.40px;background:#fff;border:1px solid #dddddd;box-sizing:border-box;border-radius:3px;"></div>
<div class="a" style="left:734.70px;top:141.20px;width:272.00px;height:24.40px;background:#fff;border:1px solid #dddddd;box-sizing:border-box;border-radius:3px;"></div>
<div class="a" style="left:1011.00px;top:141.20px;width:271.50px;height:24.40px;background:#fff;border:1px solid #dddddd;box-sizing:border-box;border-radius:3px;"></div>
<div class="a" style="left:483.50px;top:142.00px;width:1px;height:23.00px;background:#dddddd"></div>
<div class="a" style="left:606.80px;top:142.00px;width:1px;height:23.00px;background:#dddddd"></div>
<svg class="a" style="left:468.00px;top:150.30px" width="8" height="6" viewBox="0 0 8 6"><path d="M0 1.700H8.100M0 4.500H8.100" stroke="#333" stroke-width="1.050"/></svg>
<div class="a" style="left:487.80px;top:148.80px;width:10.00px;height:10.00px;border-radius:50%;background:#c8005f"></div>
<div class="a" style="left:611.50px;top:148.80px;width:10.00px;height:10.00px;border-radius:50%;background:#24466e"></div>
<div class="a" style="left:738.50px;top:148.80px;width:10.00px;height:10.00px;border-radius:50%;background:#ff4f0a"></div>
<div class="a" style="left:1014.80px;top:148.80px;width:10.00px;height:10.00px;border-radius:50%;background:#2e8b0e"></div>
<svg class="a" style="left:592.00px;top:147.80px" width="12" height="12" viewBox="0 0 12 12"><path d="M6 .8V11.200M.8 6H11.200" stroke="#444" stroke-width="1" fill="none"/>
<path d="M6 0L8 2.600H4zM6 12L4 9.400H8zM0 6L2.600 4V8zM12 6L9.400 8V4z" fill="#444"/></svg>
<svg class="a" style="left:715.70px;top:147.80px" width="12" height="12" viewBox="0 0 12 12"><path d="M6 .8V11.200M.8 6H11.200" stroke="#444" stroke-width="1" fill="none"/>
<path d="M6 0L8 2.600H4zM6 12L4 9.400H8zM0 6L2.600 4V8zM12 6L9.400 8V4z" fill="#444"/></svg>
<svg class="a" style="left:990.30px;top:147.80px" width="12" height="12" viewBox="0 0 12 12"><path d="M6 .8V11.200M.8 6H11.200" stroke="#444" stroke-width="1" fill="none"/>
<path d="M6 0L8 2.600H4zM6 12L4 9.400H8zM0 6L2.600 4V8zM12 6L9.400 8V4z" fill="#444"/></svg>
<svg class="a" style="left:1266.60px;top:147.80px" width="12" height="12" viewBox="0 0 12 12"><path d="M6 .8V11.200M.8 6H11.200" stroke="#444" stroke-width="1" fill="none"/>
<path d="M6 0L8 2.600H4zM6 12L4 9.400H8zM0 6L2.600 4V8zM12 6L9.400 8V4z" fill="#444"/></svg>
<div class="a" style="left:1290.10px;top:134.00px;width:31.80px;height:32.00px;background:#0560b8;border-radius:3.5px;"></div>
<svg class="a" style="left:1297.50px;top:142.10px" width="17.6" height="17.6" viewBox="0 0 17.6 17.6"><path fill-rule="evenodd" fill="#ffffff" stroke="#ffffff" stroke-width=".7" stroke-linejoin="round" d="M7.49 3.34L7.65 1.09L9.95 1.09L10.11 3.34L11.73 4.01L13.44 2.53L15.07 4.16L13.59 5.87L14.26 7.49L16.51 7.65L16.51 9.95L14.26 10.11L13.59 11.73L15.07 13.44L13.44 15.07L11.73 13.59L10.11 14.26L9.95 16.51L7.65 16.51L7.49 14.26L5.87 13.59L4.16 15.07L2.53 13.44L4.01 11.73L3.34 10.11L1.09 9.95L1.09 7.65L3.34 7.49L4.01 5.87L2.53 4.16L4.16 2.53L5.87 4.01ZM6.00 8.80A2.80 2.80 0 1 0 11.60 8.80A2.80 2.80 0 1 0 6.00 8.80Z"/></svg>
<svg class="a" style="left:0.00px;top:0.00px" width="1380" height="900" viewBox="0 0 1380 900"><path d="M472.7 173.7V661.7" stroke="#e8e8e8" stroke-width="1"/>
<path d="M525.2 173.7V661.7" stroke="#e8e8e8" stroke-width="1"/>
<path d="M577.7 173.7V661.7" stroke="#e8e8e8" stroke-width="1"/>
<path d="M630.2 173.7V661.7" stroke="#e8e8e8" stroke-width="1"/>
<path d="M682.7 173.7V661.7" stroke="#e8e8e8" stroke-width="1"/>
<path d="M735.2 173.7V661.7" stroke="#e8e8e8" stroke-width="1"/>
<path d="M787.7 173.7V661.7" stroke="#e8e8e8" stroke-width="1"/>
<path d="M840.2 173.7V661.7" stroke="#e8e8e8" stroke-width="1"/>
<path d="M892.7 173.7V661.7" stroke="#e8e8e8" stroke-width="1"/>
<path d="M945.2 173.7V661.7" stroke="#e8e8e8" stroke-width="1"/>
<path d="M997.7 173.7V661.7" stroke="#e8e8e8" stroke-width="1"/>
<path d="M1050.2 173.7V661.7" stroke="#e8e8e8" stroke-width="1"/>
<path d="M1102.7 173.7V661.7" stroke="#e8e8e8" stroke-width="1"/>
<path d="M1155.2 173.7V661.7" stroke="#e8e8e8" stroke-width="1"/>
<path d="M1207.7 173.7V661.7" stroke="#e8e8e8" stroke-width="1"/>
<path d="M1260.2 173.7V661.7" stroke="#e8e8e8" stroke-width="1"/>
<path d="M1312.7 173.7V661.7" stroke="#e8e8e8" stroke-width="1"/>
<path d="M460.0 661.5H1322.0" stroke="#e8e8e8" stroke-width="1"/>
<path d="M460.0 569.5H1322.0" stroke="#e8e8e8" stroke-width="1"/>
<path d="M460.0 477.5H1322.0" stroke="#e8e8e8" stroke-width="1"/>
<path d="M460.0 385.5H1322.0" stroke="#e8e8e8" stroke-width="1"/>
<path d="M460.0 293.5H1322.0" stroke="#e8e8e8" stroke-width="1"/>
<path d="M460.0 201.5H1322.0" stroke="#e8e8e8" stroke-width="1"/>
<path d="M460.0 173.9H1322.0" stroke="#e8e8e8" stroke-width="1"/>
<path d="M459.5 665.9000000000001H1322.0" stroke="#828282" stroke-width="2"/>
<path d="M472.7 665.7v4.500" stroke="#8c8c8c" stroke-width="1.200"/>
<path d="M525.2 665.7v4.500" stroke="#8c8c8c" stroke-width="1.200"/>
<path d="M577.7 665.7v4.500" stroke="#8c8c8c" stroke-width="1.200"/>
<path d="M630.2 665.7v4.500" stroke="#8c8c8c" stroke-width="1.200"/>
<path d="M682.7 665.7v4.500" stroke="#8c8c8c" stroke-width="1.200"/>
<path d="M735.2 665.7v4.500" stroke="#8c8c8c" stroke-width="1.200"/>
<path d="M787.7 665.7v4.500" stroke="#8c8c8c" stroke-width="1.200"/>
<path d="M840.2 665.7v4.500" stroke="#8c8c8c" stroke-width="1.200"/>
<path d="M892.7 665.7v4.500" stroke="#8c8c8c" stroke-width="1.200"/>
<path d="M945.2 665.7v4.500" stroke="#8c8c8c" stroke-width="1.200"/>
<path d="M997.7 665.7v4.500" stroke="#8c8c8c" stroke-width="1.200"/>
<path d="M1050.2 665.7v4.500" stroke="#8c8c8c" stroke-width="1.200"/>
<path d="M1102.7 665.7v4.500" stroke="#8c8c8c" stroke-width="1.200"/>
<path d="M1155.2 665.7v4.500" stroke="#8c8c8c" stroke-width="1.200"/>
<path d="M1207.7 665.7v4.500" stroke="#8c8c8c" stroke-width="1.200"/>
<path d="M1260.2 665.7v4.500" stroke="#8c8c8c" stroke-width="1.200"/>
<path d="M1312.7 665.7v4.500" stroke="#8c8c8c" stroke-width="1.200"/>
<path d="M460.5 665.7v4.500" stroke="#8c8c8c" stroke-width="1.200"/>
<path d="M1321.5 665.7v4.500" stroke="#8c8c8c" stroke-width="1.200"/>
<path d="M460.0 661.7H499V173.7H1243.7V661.7H1322.0" fill="none" stroke="#88b86c" stroke-width="1.900"/>
<path d="M1146.300 173.7V661.7" stroke="#62a341" stroke-width="1.100"/>
<path d="M1138.300 173.7H1146.300M1138.300 661.7H1146.300" stroke="#62a341" stroke-width="1.100"/>
<path d="M499.0 661.7 L504.3 648.3 L509.3 635.3 L514.0 634.3 L519.3 609.0 L525.0 595.0 L530.0 589.0 L535.3 578.3 L540.7 568.3 L546.0 562.3 L551.3 537.7 L556.0 537.0 L561.7 525.0 L566.7 515.0 L572.3 496.7 L577.7 479.0 L582.7 477.0 L588.0 457.3 L593.3 447.7 L598.3 438.7 L603.3 418.3 L608.7 411.7 L614.3 391.7 L619.3 404.3 L624.7 397.0 L630.0 406.0 L640.0 407.0 L650.7 393.3 L656.0 401.3 L661.0 400.0 L666.7 407.0 L671.7 405.7 L677.0 395.0 L687.7 405.3 L692.7 394.0 L698.0 402.0 L703.3 393.3 L708.7 391.0 L713.7 372.7 L719.0 376.3 L735.0 360.3 L740.0 358.7 L745.3 352.0 L750.7 335.7 L755.7 340.0 L766.3 321.3 L771.7 329.0 L782.0 315.0 L787.3 303.3 L797.7 294.0 L808.3 294.3 L813.3 290.0 L824.0 272.7 L829.3 271.7 L834.7 256.7 L840.0 259.3 L845.3 245.3 L861.0 244.3 L866.3 230.0 L871.7 221.0 L877.0 214.5 L882.5 209.0 L888.3 203.6 L892.8 203.4 L897.2 193.8 L903.0 203.6 L908.0 189.0 L923.9 176.4 L934.0 180.4 L939.4 188.6 L945.0 176.7 L950.0 188.0 L955.8 179.3 L960.6 177.5 L966.0 182.1 L987.0 182.2 L992.0 173.8 L997.4 186.2 L1002.6 175.0 L1007.7 189.3 L1013.0 174.3 L1018.6 182.8 L1023.2 179.3 L1028.3 183.3 L1034.0 196.3 L1039.1 193.4 L1044.2 208.6 L1054.8 222.4 L1060.1 215.9 L1065.7 234.0 L1071.0 231.5 L1081.2 251.4 L1086.2 247.8 L1096.5 272.0 L1107.7 275.8 L1112.9 293.2 L1118.4 289.4 L1123.3 305.4 L1128.5 300.2 L1138.3 340.9 L1145.9 387.8 L1153.9 420.0 L1160.9 451.3 L1166.0 480.9 L1170.6 491.3 L1174.8 513.9 L1180.0 543.5 L1191.1 570.3 L1196.3 565.0 L1201.6 580.0 L1217.6 606.8 L1222.8 598.4 L1228.0 613.0 L1233.2 620.7 L1238.4 619.0 L1243.7 635.7 L1248.9 661.7" fill="none" stroke="#ff5a14" stroke-width="1.150" stroke-linejoin="round"/>
<path d="M499.0 661.7 L504.3 647.3 L509.3 649.3 L514.0 633.3 L525.0 615.0 L530.0 600.0 L535.3 591.0 L540.7 586.0 L546.0 575.7 L551.3 572.7 L556.7 556.7 L566.7 545.7 L577.7 528.3 L582.7 515.0 L588.0 506.7 L598.3 479.0 L603.3 473.3 L614.3 480.0 L619.7 470.0 L630.0 480.7 L640.7 480.0 L651.0 468.3 L656.7 479.0 L666.7 472.3 L672.3 480.7 L677.7 476.0 L682.7 480.7 L688.0 470.7 L693.3 480.7 L709.0 468.3 L714.3 472.3 L719.3 469.3 L724.3 470.0 L729.3 480.7 L735.0 473.3 L740.0 475.0 L745.7 472.3 L751.0 478.3 L756.0 478.7 L761.7 474.0 L766.7 477.0 L787.7 471.7 L803.3 480.7 L808.3 476.7 L813.3 479.3 L819.0 468.7 L835.0 477.3 L840.0 477.7 L845.3 469.0 L850.0 476.7 L860.7 478.3 L866.0 470.0 L876.7 468.3 L881.7 470.7 L887.3 479.0 L892.7 473.3 L898.3 453.3 L910.0 425.0 L912.2 419.0 L920.9 389.6 L927.8 372.2 L934.8 347.8 L945.2 320.0 L950.4 311.3 L955.7 290.4 L960.9 280.0 L971.3 243.5 L981.7 219.1 L992.2 190.6 L997.4 203.5 L1002.6 208.7 L1020.0 241.7 L1028.7 259.1 L1033.9 280.0 L1039.1 281.0 L1044.3 291.5 L1054.8 321.7 L1061.0 327.0 L1072.2 353.0 L1077.4 361.7 L1082.6 382.6 L1105.2 420.0 L1112.2 443.7 L1117.4 445.0 L1123.3 467.0 L1145.2 498.3 L1150.4 503.5 L1155.0 505.2 L1166.1 523.3 L1170.6 521.9 L1175.8 526.1 L1180.0 539.3 L1185.9 541.7 L1192.2 552.9 L1197.4 557.4 L1201.9 553.9 L1207.1 568.9 L1212.3 565.4 L1217.6 568.9 L1223.5 586.3 L1228.0 590.4 L1233.2 586.3 L1243.7 596.7 L1248.9 661.7" fill="none" stroke="#c8125f" stroke-width="1.150" stroke-linejoin="round"/>
<path d="M503.3 661.7 L514.3 644.3 L519.7 648.7 L525.0 639.3 L530.0 642.7 L535.3 622.7 L540.7 620.0 L546.0 628.0 L566.7 607.3 L572.3 584.0 L577.7 601.7 L582.7 578.3 L588.0 580.0 L598.3 562.7 L609.0 562.0 L619.7 541.3 L640.7 540.0 L651.0 514.3 L656.7 522.3 L661.7 504.0 L666.7 517.3 L682.7 503.3 L688.0 480.0 L693.3 487.3 L698.3 472.7 L703.7 484.7 L714.3 459.0 L719.3 467.7 L724.7 459.3 L730.0 466.0 L735.0 456.7 L740.3 461.3 L745.7 457.3 L751.0 442.7 L756.0 462.3 L761.3 457.7 L766.7 441.7 L777.0 459.3 L782.3 450.7 L792.7 455.0 L798.0 443.3 L808.3 440.7 L819.0 453.3 L829.3 449.3 L835.0 437.3 L845.3 442.3 L850.7 433.3 L855.7 448.3 L866.0 439.3 L871.7 431.0 L876.7 431.0 L882.0 446.7 L887.3 433.3 L892.7 439.3 L903.3 429.3 L908.5 440.8 L918.4 423.7 L923.7 433.0 L928.9 427.1 L934.1 433.0 L940.0 420.9 L945.2 438.3 L950.4 429.6 L955.7 408.7 L960.9 412.2 L971.3 400.0 L992.2 363.5 L997.4 344.3 L1007.8 349.6 L1013.0 323.5 L1019.0 317.2 L1024.2 325.2 L1029.4 313.0 L1033.9 308.9 L1039.1 281.7 L1054.8 279.3 L1060.0 271.3 L1070.4 262.6 L1075.7 263.7 L1080.9 251.1 L1086.1 262.6 L1091.3 266.1 L1096.5 252.2 L1101.7 253.9 L1107.7 244.5 L1118.1 253.9 L1128.5 242.8 L1133.7 250.4 L1139.3 240.7 L1149.7 256.7 L1155.0 234.8 L1160.2 237.2 L1166.1 250.4 L1174.8 250.4 L1180.7 242.8 L1185.9 246.3 L1191.1 230.6 L1196.3 244.5 L1201.9 228.5 L1207.1 240.0 L1212.3 233.7 L1217.6 235.8 L1223.5 225.4 L1233.2 227.8 L1238.4 231.3 L1243.7 219.1 L1248.9 661.7" fill="none" stroke="#2a4a6e" stroke-width="1.150" stroke-linejoin="round"/>
<path d="M454.300 173.7H459.500V661.7H454.300" fill="none" stroke="#ea7cb8" stroke-width="1.900"/>
<path d="M454.300 569.5H460.300" stroke="#d0207a" stroke-width="1.200"/>
<path d="M454.300 477.5H460.300" stroke="#d0207a" stroke-width="1.200"/>
<path d="M454.300 385.5H460.300" stroke="#d0207a" stroke-width="1.200"/>
<path d="M454.300 293.5H460.300" stroke="#d0207a" stroke-width="1.200"/>
<path d="M454.300 201.5H460.300" stroke="#d0207a" stroke-width="1.200"/>
<path d="M870.700 173.7V661.7" stroke="#ff5a14" stroke-width="1.200"/>
<path d="M870.700 661.7h6" stroke="#ff7a40" stroke-width="1.100"/>
<path d="M870.700 546.2h6" stroke="#ff7a40" stroke-width="1.100"/>
<path d="M870.700 430.7h6" stroke="#ff7a40" stroke-width="1.100"/>
<path d="M870.700 315.2h6" stroke="#ff7a40" stroke-width="1.100"/>
<path d="M870.700 199.7h6" stroke="#ff7a40" stroke-width="1.100"/>
<path d="M870.700 173.1h6" stroke="#ff7a40" stroke-width="1.100"/></svg>
<svg class="a" style="left:0.00px;top:0.00px" width="1380" height="900" viewBox="0 0 1380 900"><path d="M846 171.70000000000002V166.8H904V171.70000000000002" fill="none" stroke="#5c10ff" stroke-width="2.100" stroke-dasharray="12 1.800 11.300 3.300 11.100 3.300 11.100 3.300 12"/>
<path d="M846 682.1999999999999V686.8H904V682.1999999999999" fill="none" stroke="#5c10ff" stroke-width="2.100" stroke-dasharray="10.400 3 11.600 3 11.600 3 11.100 3 11"/>
<path d="M846 175.0V679.1999999999999" fill="none" stroke="#5c10ff" stroke-width="2.100" stroke-dasharray="11.900 3.010"/>
<path d="M904 175.0V679.1999999999999" fill="none" stroke="#5c10ff" stroke-width="2.100" stroke-dasharray="11.900 3.010"/>
<path d="M1083 171.70000000000002V166.8H1167.1V171.70000000000002" fill="none" stroke="#5c10ff" stroke-width="2.100" stroke-dasharray="11.600 4.300 12.400 4.300 12.400 4.300 12.400 4.300 12.400 4.300 12"/>
<path d="M1083 682.1999999999999V686.8H1167.1V682.1999999999999" fill="none" stroke="#5c10ff" stroke-width="2.100" stroke-dasharray="10.400 4.300 12.400 4.300 12.400 4.300 12.400 4.300 12.400 4.300 14"/>
<path d="M1083 175.0V679.1999999999999" fill="none" stroke="#5c10ff" stroke-width="2.100" stroke-dasharray="11.900 3.010"/>
<path d="M1167.1 175.0V679.1999999999999" fill="none" stroke="#5c10ff" stroke-width="2.100" stroke-dasharray="11.900 3.010"/>
<path d="M941.700 165.500L1007 366L1063.500 165.500" fill="none" stroke="#5c10ff" stroke-width="2.300" stroke-linejoin="miter"/>
<path d="M937 175.200L941.600 165.300L951.200 170.300M1053.300 170.500L1063.600 165.300L1068 175" fill="none" stroke="#5c10ff" stroke-width="2.300"/>
<rect x="876.200" y="367.100" width="262.200" height="29.600" rx="4.500" fill="#fff" stroke="#5c10ff" stroke-width="2"/></svg>
<div class="a" style="left:460.00px;top:690.20px;width:31.70px;height:31.60px;background:#fff;border:1px solid #dddddd;box-sizing:border-box;border-radius:3px;"></div>
<div class="a" style="left:496.20px;top:690.20px;width:32.60px;height:31.60px;background:#fff;border:1px solid #dddddd;box-sizing:border-box;border-radius:3px;"></div>
<div class="a" style="left:533.30px;top:690.20px;width:32.40px;height:31.60px;background:#fff;border:1px solid #c9d3dc;box-sizing:border-box;border-radius:3px;"></div>
<div class="a" style="left:800.50px;top:690.20px;width:31.80px;height:31.60px;background:#fff;border:1px solid #dddddd;box-sizing:border-box;border-radius:3px;"></div>
<div class="a" style="left:836.30px;top:690.20px;width:109.10px;height:31.60px;background:#fff;border:1px solid #dddddd;box-sizing:border-box;border-radius:3px;"></div>
<div class="a" style="left:913.50px;top:691.00px;width:1px;height:30.50px;background:#dddddd"></div>
<div class="a" style="left:949.30px;top:690.20px;width:32.10px;height:31.60px;background:#fff;border:1px solid #dddddd;box-sizing:border-box;border-radius:3px;"></div>
<div class="a" style="left:1220.80px;top:690.20px;width:32.70px;height:31.60px;background:#fff;border:1px solid #dddddd;box-sizing:border-box;border-radius:3px;"></div>
<div class="a" style="left:1258.30px;top:690.20px;width:63.70px;height:31.60px;background:#fff;border:1px solid #d6dbe0;box-sizing:border-box;border-radius:3px;"></div>
<div class="a" style="left:1289.80px;top:691.00px;width:1px;height:30.50px;background:#dddddd"></div>
<svg class="a" style="left:472.80px;top:702.70px" width="6" height="7" viewBox="0 0 6 7"><path d="M4.700 .5V6.500L.8 3.500z" fill="#444"/></svg>
<svg class="a" style="left:1303.50px;top:702.70px" width="6" height="7" viewBox="0 0 6 7"><path d="M1.300 .5V6.500L5.200 3.500z" fill="#444"/></svg>
<svg class="a" style="left:504.60px;top:697.10px" width="16" height="17" viewBox="0 0 16 17"><rect x="1.300" y="2.500" width="13.400" height="13" rx="1.300" fill="none" stroke="#a2a2a2" stroke-width="1.100"/>
<path d="M1.300 6.200H14.700" stroke="#a2a2a2" stroke-width="1" fill="none"/><circle cx="4.700" cy="2.300" r="1.100" fill="#fff" stroke="#a2a2a2" stroke-width=".9"/><circle cx="11.300" cy="2.300" r="1.100" fill="#fff" stroke="#a2a2a2" stroke-width=".9"/><rect x="9.200" y="10.200" width="3.700" height="3.600" fill="#a2a2a2"/></svg>
<svg class="a" style="left:541.40px;top:698.00px" width="16" height="16" viewBox="0 0 16 16"><circle cx="8" cy="8" r="6.900" fill="none" stroke="#a5a5a5" stroke-width="1.100"/><path d="M8 3.800V8.300H12" fill="none" stroke="#a5a5a5" stroke-width="1.100"/></svg>
<svg class="a" style="left:1229.30px;top:697.10px" width="16" height="17" viewBox="0 0 16 17"><rect x="1.300" y="2.500" width="13.400" height="13" rx="1.300" fill="none" stroke="#a2a2a2" stroke-width="1.100"/>
<path d="M1.300 6.200H14.700" stroke="#a2a2a2" stroke-width="1" fill="none"/><circle cx="4.700" cy="2.300" r="1.100" fill="#fff" stroke="#a2a2a2" stroke-width=".9"/><circle cx="11.300" cy="2.300" r="1.100" fill="#fff" stroke="#a2a2a2" stroke-width=".9"/><rect x="9.200" y="10.200" width="3.700" height="3.600" fill="#a2a2a2"/></svg>
<svg class="a" style="left:1266.30px;top:698.00px" width="16" height="16" viewBox="0 0 16 16"><circle cx="8" cy="8" r="6.900" fill="none" stroke="#a5a5a5" stroke-width="1.100"/><path d="M8 3.800V8.300H12" fill="none" stroke="#a5a5a5" stroke-width="1.100"/></svg>
<svg class="a" style="left:806.00px;top:697.00px" width="22" height="20" viewBox="0 0 22 20"><path d="M2.600 2.400V17.500H18.700" fill="none" stroke="#a8a8a8" stroke-width="1"/><path d="M3.900 15.300H17.500" fill="none" stroke="#d5d5d5" stroke-width=".8"/><path d="M3.600 3.300C5.500 11.500 7.600 15 10.100 15S14.900 11.500 17 3.300" fill="none" stroke="#555" stroke-width="1.100"/></svg>
<svg class="a" style="left:920.45px;top:697.45px" width="17.5" height="17.5" viewBox="0 0 24 24"><path fill="#555555"  d="M12 17c1.1 0 2-.9 2-2s-.9-2-2-2-2 .9-2 2 .9 2 2 2zm6-9h-1V6c0-2.76-2.24-5-5-5S7 3.24 7 6h1.9c0-1.71 1.39-3.1 3.1-3.1 1.71 0 3.1 1.39 3.1 3.1v2H6c-1.1 0-2 .9-2 2v10c0 1.1.9 2 2 2h12c1.1 0 2-.9 2-2V10c0-1.1-.9-2-2-2zm0 12H6V10h12v10z"/></svg>
<svg class="a" style="left:957.20px;top:698.80px" width="16.8" height="16.8" viewBox="0 0 24 24"><path fill="#555555"  d="M13 3c-4.97 0-9 4.03-9 9H1l3.89 3.89.07.14L9 12H6c0-3.87 3.13-7 7-7s7 3.13 7 7-3.13 7-7 7c-1.93 0-3.68-.79-4.94-2.06l-1.42 1.42C8.27 19.99 10.51 21 13 21c4.97 0 9-4.03 9-9s-4.03-9-9-9zm-1 5v5l4.28 2.54.72-1.21-3.5-2.08V8H12z"/></svg>
<svg class="a" style="left:0.00px;top:0.00px" width="1380" height="900" viewBox="0 0 1380 900"><rect x="460" y="730" width="861.800" height="30" fill="#ffffff"/>
<path d="M461.65 759.6L464.95 734L465.55 733.2M468.43 759.6L471.73 734L472.33 733.2M475.21 759.6L478.51 734L479.11 733.2M481.99 759.6L485.29 734L485.89 733.2M488.77 759.6L492.07 734L492.67 733.2M495.55 759.6L498.85 734L499.45 733.2M502.33 759.6L505.63 734L506.23 733.2M509.11 759.6L512.41 734L513.01 733.2M515.89 759.6L519.19 734L519.79 733.2M522.67 759.6L525.97 734L526.57 733.2M529.45 759.6L532.75 734L533.35 733.2M536.23 759.6L539.53 734L540.13 733.2M543.01 759.6L546.31 734L546.91 733.2M549.79 759.6L553.09 734L553.69 733.2M556.57 759.6L559.87 734L560.47 733.2M563.35 759.6L566.65 734L567.25 733.2M570.13 759.6L573.43 734L574.03 733.2M576.91 759.6L580.21 734L580.81 733.2M583.69 759.6L586.99 734L587.59 733.2M590.47 759.6L593.77 734L594.37 733.2M597.25 759.6L600.55 734L601.15 733.2M604.03 759.6L607.33 734L607.93 733.2M610.81 759.6L614.11 734L614.71 733.2M617.59 759.6L620.89 734L621.49 733.2M624.37 759.6L627.67 734L628.27 733.2M631.15 759.6L634.45 734L635.05 733.2M637.93 759.6L641.23 734L641.83 733.2M644.71 759.6L648.01 734L648.61 733.2M651.49 759.6L654.79 734L655.39 733.2M658.27 759.6L661.57 734L662.17 733.2M665.05 759.6L668.35 734L668.95 733.2M671.83 759.6L675.13 734L675.73 733.2M678.61 759.6L681.91 734L682.51 733.2M685.39 759.6L688.69 734L689.29 733.2M692.17 759.6L695.47 734L696.07 733.2M698.95 759.6L702.25 734L702.85 733.2M705.73 759.6L709.03 734L709.63 733.2M712.51 759.6L715.81 734L716.41 733.2M719.29 759.6L722.59 734L723.19 733.2M726.07 759.6L729.37 734L729.97 733.2M732.85 759.6L736.15 734L736.75 733.2M739.63 759.6L742.93 734L743.53 733.2M746.41 759.6L749.71 734L750.31 733.2M753.19 759.6L756.49 734L757.09 733.2M759.97 759.6L763.27 734L763.87 733.2M766.75 759.6L770.05 734L770.65 733.2M773.53 759.6L776.83 734L777.43 733.2M780.31 759.6L783.61 734L784.21 733.2M787.09 759.6L790.39 734L790.99 733.2M793.87 759.6L797.17 734L797.77 733.2M800.65 759.6L803.95 734L804.55 733.2M807.43 759.6L810.73 734L811.33 733.2M814.21 759.6L817.51 734L818.11 733.2M820.99 759.6L824.29 734L824.89 733.2M827.77 759.6L831.07 734L831.67 733.2M834.55 759.6L837.85 734L838.45 733.2M841.33 759.6L844.63 734L845.23 733.2M848.11 759.6L851.41 734L852.01 733.2M854.89 759.6L858.19 734L858.79 733.2M861.67 759.6L864.97 734L865.57 733.2M868.45 759.6L871.75 734L872.35 733.2M875.23 759.6L878.53 734L879.13 733.2M882.01 759.6L885.31 734L885.91 733.2M888.79 759.6L892.09 734L892.69 733.2M895.57 759.6L898.87 734L899.47 733.2M902.35 759.6L905.65 734L906.25 733.2M909.13 759.6L912.43 734L913.03 733.2M915.91 759.6L919.21 734L919.81 733.2M922.69 759.6L925.99 734L926.59 733.2M929.47 759.6L932.77 734L933.37 733.2M936.25 759.6L939.55 734L940.15 733.2M943.03 759.6L946.33 734L946.93 733.2M949.81 759.6L953.11 734L953.71 733.2M956.59 759.6L959.89 734L960.49 733.2M963.37 759.6L966.67 734L967.27 733.2M970.15 759.6L973.45 734L974.05 733.2M976.93 759.6L980.23 734L980.83 733.2M983.71 759.6L987.01 734L987.61 733.2M990.49 759.6L993.79 734L994.39 733.2M997.27 759.6L1000.57 734L1001.17 733.2M1004.05 759.6L1007.35 734L1007.95 733.2M1010.83 759.6L1014.13 734L1014.73 733.2M1017.61 759.6L1020.91 734L1021.51 733.2M1024.39 759.6L1027.69 734L1028.29 733.2M1031.17 759.6L1034.47 734L1035.07 733.2M1037.95 759.6L1041.25 734L1041.85 733.2M1044.73 759.6L1048.03 734L1048.63 733.2M1051.51 759.6L1054.81 734L1055.41 733.2M1058.29 759.6L1061.59 734L1062.19 733.2M1065.07 759.6L1068.37 734L1068.97 733.2M1071.85 759.6L1075.15 734L1075.75 733.2M1078.63 759.6L1081.93 734L1082.53 733.2M1085.41 759.6L1088.71 734L1089.31 733.2M1092.19 759.6L1095.49 734L1096.09 733.2M1098.97 759.6L1102.27 734L1102.87 733.2M1105.75 759.6L1109.05 734L1109.65 733.2M1112.53 759.6L1115.83 734L1116.43 733.2M1119.31 759.6L1122.61 734L1123.21 733.2M1126.09 759.6L1129.39 734L1129.99 733.2M1132.87 759.6L1136.17 734L1136.77 733.2M1139.65 759.6L1142.95 734L1143.55 733.2M1146.43 759.6L1149.73 734L1150.33 733.2M1153.21 759.6L1156.51 734L1157.11 733.2M1159.99 759.6L1163.29 734L1163.89 733.2M1166.77 759.6L1170.07 734L1170.67 733.2M1173.55 759.6L1176.85 734L1177.45 733.2M1180.33 759.6L1183.63 734L1184.23 733.2M1187.11 759.6L1190.41 734L1191.01 733.2M1193.89 759.6L1197.19 734L1197.79 733.2M1200.67 759.6L1203.97 734L1204.57 733.2M1207.45 759.6L1210.75 734L1211.35 733.2M1214.23 759.6L1217.53 734L1218.13 733.2M1221.01 759.6L1224.31 734L1224.91 733.2M1227.79 759.6L1231.09 734L1231.69 733.2M1234.57 759.6L1237.87 734L1238.47 733.2M1241.35 759.6L1244.65 734L1245.25 733.2M1248.13 759.6L1251.43 734L1252.03 733.2M1254.91 759.6L1258.21 734L1258.81 733.2M1261.69 759.6L1264.99 734L1265.59 733.2M1268.47 759.6L1271.77 734L1272.37 733.2M1275.25 759.6L1278.55 734L1279.15 733.2M1282.03 759.6L1285.33 734L1285.93 733.2M1288.81 759.6L1292.11 734L1292.71 733.2M1295.59 759.6L1298.89 734L1299.49 733.2M1302.37 759.6L1305.67 734L1306.27 733.2M1309.15 759.6L1312.45 734L1313.05 733.2M1315.93 759.6L1319.23 734L1319.83 733.2M1321.30 759.6L1321.30 734L1321.30 733.2" fill="none" stroke="#ffc9b5" stroke-width="1.600" stroke-linejoin="round"/>
<path d="M462.85 757L466.25 735M469.63 757L473.03 735M476.41 757L479.81 735M483.19 757L486.59 735M489.97 757L493.37 735M496.75 757L500.15 735M503.53 757L506.93 735M510.31 757L513.71 735M517.09 757L520.49 735M523.87 757L527.27 735M530.65 757L534.05 735M537.43 757L540.83 735M544.21 757L547.61 735M550.99 757L554.39 735M557.77 757L561.17 735M564.55 757L567.95 735M571.33 757L574.73 735M578.11 757L581.51 735M584.89 757L588.29 735M591.67 757L595.07 735M598.45 757L601.85 735M605.23 757L608.63 735M612.01 757L615.41 735M618.79 757L622.19 735M625.57 757L628.97 735M632.35 757L635.75 735M639.13 757L642.53 735M645.91 757L649.31 735M652.69 757L656.09 735M659.47 757L662.87 735M666.25 757L669.65 735M673.03 757L676.43 735M679.81 757L683.21 735M686.59 757L689.99 735M693.37 757L696.77 735M700.15 757L703.55 735M706.93 757L710.33 735M713.71 757L717.11 735M720.49 757L723.89 735M727.27 757L730.67 735M734.05 757L737.45 735M740.83 757L744.23 735M747.61 757L751.01 735M754.39 757L757.79 735M761.17 757L764.57 735M767.95 757L771.35 735M774.73 757L778.13 735M781.51 757L784.91 735M788.29 757L791.69 735M795.07 757L798.47 735M801.85 757L805.25 735M808.63 757L812.03 735M815.41 757L818.81 735M822.19 757L825.59 735M828.97 757L832.37 735M835.75 757L839.15 735M842.53 757L845.93 735M849.31 757L852.71 735M856.09 757L859.49 735M862.87 757L866.27 735M869.65 757L873.05 735M876.43 757L879.83 735M883.21 757L886.61 735M889.99 757L893.39 735M896.77 757L900.17 735M903.55 757L906.95 735M910.33 757L913.73 735M917.11 757L920.51 735M923.89 757L927.29 735M930.67 757L934.07 735M937.45 757L940.85 735M944.23 757L947.63 735M951.01 757L954.41 735M957.79 757L961.19 735M964.57 757L967.97 735M971.35 757L974.75 735M978.13 757L981.53 735M984.91 757L988.31 735M991.69 757L995.09 735M998.47 757L1001.87 735M1005.25 757L1008.65 735M1012.03 757L1015.43 735M1018.81 757L1022.21 735M1025.59 757L1028.99 735M1032.37 757L1035.77 735M1039.15 757L1042.55 735M1045.93 757L1049.33 735M1052.71 757L1056.11 735M1059.49 757L1062.89 735M1066.27 757L1069.67 735M1073.05 757L1076.45 735M1079.83 757L1083.23 735M1086.61 757L1090.01 735M1093.39 757L1096.79 735M1100.17 757L1103.57 735M1106.95 757L1110.35 735M1113.73 757L1117.13 735M1120.51 757L1123.91 735M1127.29 757L1130.69 735M1134.07 757L1137.47 735M1140.85 757L1144.25 735M1147.63 757L1151.03 735M1154.41 757L1157.81 735M1161.19 757L1164.59 735M1167.97 757L1171.37 735M1174.75 757L1178.15 735M1181.53 757L1184.93 735M1188.31 757L1191.71 735M1195.09 757L1198.49 735M1201.87 757L1205.27 735M1208.65 757L1212.05 735M1215.43 757L1218.83 735M1222.21 757L1225.61 735M1228.99 757L1232.39 735M1235.77 757L1239.17 735M1242.55 757L1245.95 735M1249.33 757L1252.73 735M1256.11 757L1259.51 735M1262.89 757L1266.29 735M1269.67 757L1273.07 735M1276.45 757L1279.85 735M1283.23 757L1286.63 735M1290.01 757L1293.41 735M1296.79 757L1300.19 735M1303.57 757L1306.97 735M1310.35 757L1313.75 735M1317.13 757L1320.53 735M1321.30 757L1321.30 735" fill="none" stroke="#5f7ba6" stroke-width="1"/>
<path d="M462.35 759.3L466.05 732.2L467.55 759.3M469.13 759.3L472.83 732.2L474.33 759.3M475.91 759.3L479.61 732.2L481.11 759.3M482.69 759.3L486.39 732.2L487.89 759.3M489.47 759.3L493.17 732.2L494.67 759.3M496.25 759.3L499.95 732.2L501.45 759.3M503.03 759.3L506.73 732.2L508.23 759.3M509.81 759.3L513.51 732.2L515.01 759.3M516.59 759.3L520.29 732.2L521.79 759.3M523.37 759.3L527.07 732.2L528.57 759.3M530.15 759.3L533.85 732.2L535.35 759.3M536.93 759.3L540.63 732.2L542.13 759.3M543.71 759.3L547.41 732.2L548.91 759.3M550.49 759.3L554.19 732.2L555.69 759.3M557.27 759.3L560.97 732.2L562.47 759.3M564.05 759.3L567.75 732.2L569.25 759.3M570.83 759.3L574.53 732.2L576.03 759.3M577.61 759.3L581.31 732.2L582.81 759.3M584.39 759.3L588.09 732.2L589.59 759.3M591.17 759.3L594.87 732.2L596.37 759.3M597.95 759.3L601.65 732.2L603.15 759.3M604.73 759.3L608.43 732.2L609.93 759.3M611.51 759.3L615.21 732.2L616.71 759.3M618.29 759.3L621.99 732.2L623.49 759.3M625.07 759.3L628.77 732.2L630.27 759.3M631.85 759.3L635.55 732.2L637.05 759.3M638.63 759.3L642.33 732.2L643.83 759.3M645.41 759.3L649.11 732.2L650.61 759.3M652.19 759.3L655.89 732.2L657.39 759.3M658.97 759.3L662.67 732.2L664.17 759.3M665.75 759.3L669.45 732.2L670.95 759.3M672.53 759.3L676.23 732.2L677.73 759.3M679.31 759.3L683.01 732.2L684.51 759.3M686.09 759.3L689.79 732.2L691.29 759.3M692.87 759.3L696.57 732.2L698.07 759.3M699.65 759.3L703.35 732.2L704.85 759.3M706.43 759.3L710.13 732.2L711.63 759.3M713.21 759.3L716.91 732.2L718.41 759.3M719.99 759.3L723.69 732.2L725.19 759.3M726.77 759.3L730.47 732.2L731.97 759.3M733.55 759.3L737.25 732.2L738.75 759.3M740.33 759.3L744.03 732.2L745.53 759.3M747.11 759.3L750.81 732.2L752.31 759.3M753.89 759.3L757.59 732.2L759.09 759.3M760.67 759.3L764.37 732.2L765.87 759.3M767.45 759.3L771.15 732.2L772.65 759.3M774.23 759.3L777.93 732.2L779.43 759.3M781.01 759.3L784.71 732.2L786.21 759.3M787.79 759.3L791.49 732.2L792.99 759.3M794.57 759.3L798.27 732.2L799.77 759.3M801.35 759.3L805.05 732.2L806.55 759.3M808.13 759.3L811.83 732.2L813.33 759.3M814.91 759.3L818.61 732.2L820.11 759.3M821.69 759.3L825.39 732.2L826.89 759.3M828.47 759.3L832.17 732.2L833.67 759.3M835.25 759.3L838.95 732.2L840.45 759.3M842.03 759.3L845.73 732.2L847.23 759.3M848.81 759.3L852.51 732.2L854.01 759.3M855.59 759.3L859.29 732.2L860.79 759.3M862.37 759.3L866.07 732.2L867.57 759.3M869.15 759.3L872.85 732.2L874.35 759.3M875.93 759.3L879.63 732.2L881.13 759.3M882.71 759.3L886.41 732.2L887.91 759.3M889.49 759.3L893.19 732.2L894.69 759.3M896.27 759.3L899.97 732.2L901.47 759.3M903.05 759.3L906.75 732.2L908.25 759.3M909.83 759.3L913.53 732.2L915.03 759.3M916.61 759.3L920.31 732.2L921.81 759.3M923.39 759.3L927.09 732.2L928.59 759.3M930.17 759.3L933.87 732.2L935.37 759.3M936.95 759.3L940.65 732.2L942.15 759.3M943.73 759.3L947.43 732.2L948.93 759.3M950.51 759.3L954.21 732.2L955.71 759.3M957.29 759.3L960.99 732.2L962.49 759.3M964.07 759.3L967.77 732.2L969.27 759.3M970.85 759.3L974.55 732.2L976.05 759.3M977.63 759.3L981.33 732.2L982.83 759.3M984.41 759.3L988.11 732.2L989.61 759.3M991.19 759.3L994.89 732.2L996.39 759.3M997.97 759.3L1001.67 732.2L1003.17 759.3M1004.75 759.3L1008.45 732.2L1009.95 759.3M1011.53 759.3L1015.23 732.2L1016.73 759.3M1018.31 759.3L1022.01 732.2L1023.51 759.3M1025.09 759.3L1028.79 732.2L1030.29 759.3M1031.87 759.3L1035.57 732.2L1037.07 759.3M1038.65 759.3L1042.35 732.2L1043.85 759.3M1045.43 759.3L1049.13 732.2L1050.63 759.3M1052.21 759.3L1055.91 732.2L1057.41 759.3M1058.99 759.3L1062.69 732.2L1064.19 759.3M1065.77 759.3L1069.47 732.2L1070.97 759.3M1072.55 759.3L1076.25 732.2L1077.75 759.3M1079.33 759.3L1083.03 732.2L1084.53 759.3M1086.11 759.3L1089.81 732.2L1091.31 759.3M1092.89 759.3L1096.59 732.2L1098.09 759.3M1099.67 759.3L1103.37 732.2L1104.87 759.3M1106.45 759.3L1110.15 732.2L1111.65 759.3M1113.23 759.3L1116.93 732.2L1118.43 759.3M1120.01 759.3L1123.71 732.2L1125.21 759.3M1126.79 759.3L1130.49 732.2L1131.99 759.3M1133.57 759.3L1137.27 732.2L1138.77 759.3M1140.35 759.3L1144.05 732.2L1145.55 759.3M1147.13 759.3L1150.83 732.2L1152.33 759.3M1153.91 759.3L1157.61 732.2L1159.11 759.3M1160.69 759.3L1164.39 732.2L1165.89 759.3M1167.47 759.3L1171.17 732.2L1172.67 759.3M1174.25 759.3L1177.95 732.2L1179.45 759.3M1181.03 759.3L1184.73 732.2L1186.23 759.3M1187.81 759.3L1191.51 732.2L1193.01 759.3M1194.59 759.3L1198.29 732.2L1199.79 759.3M1201.37 759.3L1205.07 732.2L1206.57 759.3M1208.15 759.3L1211.85 732.2L1213.35 759.3M1214.93 759.3L1218.63 732.2L1220.13 759.3M1221.71 759.3L1225.41 732.2L1226.91 759.3M1228.49 759.3L1232.19 732.2L1233.69 759.3M1235.27 759.3L1238.97 732.2L1240.47 759.3M1242.05 759.3L1245.75 732.2L1247.25 759.3M1248.83 759.3L1252.53 732.2L1254.03 759.3M1255.61 759.3L1259.31 732.2L1260.81 759.3M1262.39 759.3L1266.09 732.2L1267.59 759.3M1269.17 759.3L1272.87 732.2L1274.37 759.3M1275.95 759.3L1279.65 732.2L1281.15 759.3M1282.73 759.3L1286.43 732.2L1287.93 759.3M1289.51 759.3L1293.21 732.2L1294.71 759.3M1296.29 759.3L1299.99 732.2L1301.49 759.3M1303.07 759.3L1306.77 732.2L1308.27 759.3M1309.85 759.3L1313.55 732.2L1315.05 759.3M1316.63 759.3L1320.33 732.2L1321.30 759.3M1321.30 759.3L1321.30 732.2L1321.30 759.3" fill="none" stroke="#ea5fa0" stroke-width=".9" stroke-linejoin="round"/>
<path d="M462.05 759.6L465.55 733.2L467.35 759.6M468.83 759.6L472.33 733.2L474.13 759.6M475.61 759.6L479.11 733.2L480.91 759.6M482.39 759.6L485.89 733.2L487.69 759.6M489.17 759.6L492.67 733.2L494.47 759.6M495.95 759.6L499.45 733.2L501.25 759.6M502.73 759.6L506.23 733.2L508.03 759.6M509.51 759.6L513.01 733.2L514.81 759.6M516.29 759.6L519.79 733.2L521.59 759.6M523.07 759.6L526.57 733.2L528.37 759.6M529.85 759.6L533.35 733.2L535.15 759.6M536.63 759.6L540.13 733.2L541.93 759.6M543.41 759.6L546.91 733.2L548.71 759.6M550.19 759.6L553.69 733.2L555.49 759.6M556.97 759.6L560.47 733.2L562.27 759.6M563.75 759.6L567.25 733.2L569.05 759.6M570.53 759.6L574.03 733.2L575.83 759.6M577.31 759.6L580.81 733.2L582.61 759.6M584.09 759.6L587.59 733.2L589.39 759.6M590.87 759.6L594.37 733.2L596.17 759.6M597.65 759.6L601.15 733.2L602.95 759.6M604.43 759.6L607.93 733.2L609.73 759.6M611.21 759.6L614.71 733.2L616.51 759.6M617.99 759.6L621.49 733.2L623.29 759.6M624.77 759.6L628.27 733.2L630.07 759.6M631.55 759.6L635.05 733.2L636.85 759.6M638.33 759.6L641.83 733.2L643.63 759.6M645.11 759.6L648.61 733.2L650.41 759.6M651.89 759.6L655.39 733.2L657.19 759.6M658.67 759.6L662.17 733.2L663.97 759.6M665.45 759.6L668.95 733.2L670.75 759.6M672.23 759.6L675.73 733.2L677.53 759.6M679.01 759.6L682.51 733.2L684.31 759.6M685.79 759.6L689.29 733.2L691.09 759.6M692.57 759.6L696.07 733.2L697.87 759.6M699.35 759.6L702.85 733.2L704.65 759.6M706.13 759.6L709.63 733.2L711.43 759.6M712.91 759.6L716.41 733.2L718.21 759.6M719.69 759.6L723.19 733.2L724.99 759.6M726.47 759.6L729.97 733.2L731.77 759.6M733.25 759.6L736.75 733.2L738.55 759.6M740.03 759.6L743.53 733.2L745.33 759.6M746.81 759.6L750.31 733.2L752.11 759.6M753.59 759.6L757.09 733.2L758.89 759.6M760.37 759.6L763.87 733.2L765.67 759.6M767.15 759.6L770.65 733.2L772.45 759.6M773.93 759.6L777.43 733.2L779.23 759.6M780.71 759.6L784.21 733.2L786.01 759.6M787.49 759.6L790.99 733.2L792.79 759.6M794.27 759.6L797.77 733.2L799.57 759.6M801.05 759.6L804.55 733.2L806.35 759.6M807.83 759.6L811.33 733.2L813.13 759.6M814.61 759.6L818.11 733.2L819.91 759.6M821.39 759.6L824.89 733.2L826.69 759.6M828.17 759.6L831.67 733.2L833.47 759.6M834.95 759.6L838.45 733.2L840.25 759.6M841.73 759.6L845.23 733.2L847.03 759.6M848.51 759.6L852.01 733.2L853.81 759.6M855.29 759.6L858.79 733.2L860.59 759.6M862.07 759.6L865.57 733.2L867.37 759.6M868.85 759.6L872.35 733.2L874.15 759.6M875.63 759.6L879.13 733.2L880.93 759.6M882.41 759.6L885.91 733.2L887.71 759.6M889.19 759.6L892.69 733.2L894.49 759.6M895.97 759.6L899.47 733.2L901.27 759.6M902.75 759.6L906.25 733.2L908.05 759.6M909.53 759.6L913.03 733.2L914.83 759.6M916.31 759.6L919.81 733.2L921.61 759.6M923.09 759.6L926.59 733.2L928.39 759.6M929.87 759.6L933.37 733.2L935.17 759.6M936.65 759.6L940.15 733.2L941.95 759.6M943.43 759.6L946.93 733.2L948.73 759.6M950.21 759.6L953.71 733.2L955.51 759.6M956.99 759.6L960.49 733.2L962.29 759.6M963.77 759.6L967.27 733.2L969.07 759.6M970.55 759.6L974.05 733.2L975.85 759.6M977.33 759.6L980.83 733.2L982.63 759.6M984.11 759.6L987.61 733.2L989.41 759.6M990.89 759.6L994.39 733.2L996.19 759.6M997.67 759.6L1001.17 733.2L1002.97 759.6M1004.45 759.6L1007.95 733.2L1009.75 759.6M1011.23 759.6L1014.73 733.2L1016.53 759.6M1018.01 759.6L1021.51 733.2L1023.31 759.6M1024.79 759.6L1028.29 733.2L1030.09 759.6M1031.57 759.6L1035.07 733.2L1036.87 759.6M1038.35 759.6L1041.85 733.2L1043.65 759.6M1045.13 759.6L1048.63 733.2L1050.43 759.6M1051.91 759.6L1055.41 733.2L1057.21 759.6M1058.69 759.6L1062.19 733.2L1063.99 759.6M1065.47 759.6L1068.97 733.2L1070.77 759.6M1072.25 759.6L1075.75 733.2L1077.55 759.6M1079.03 759.6L1082.53 733.2L1084.33 759.6M1085.81 759.6L1089.31 733.2L1091.11 759.6M1092.59 759.6L1096.09 733.2L1097.89 759.6M1099.37 759.6L1102.87 733.2L1104.67 759.6M1106.15 759.6L1109.65 733.2L1111.45 759.6M1112.93 759.6L1116.43 733.2L1118.23 759.6M1119.71 759.6L1123.21 733.2L1125.01 759.6M1126.49 759.6L1129.99 733.2L1131.79 759.6M1133.27 759.6L1136.77 733.2L1138.57 759.6M1140.05 759.6L1143.55 733.2L1145.35 759.6M1146.83 759.6L1150.33 733.2L1152.13 759.6M1153.61 759.6L1157.11 733.2L1158.91 759.6M1160.39 759.6L1163.89 733.2L1165.69 759.6M1167.17 759.6L1170.67 733.2L1172.47 759.6M1173.95 759.6L1177.45 733.2L1179.25 759.6M1180.73 759.6L1184.23 733.2L1186.03 759.6M1187.51 759.6L1191.01 733.2L1192.81 759.6M1194.29 759.6L1197.79 733.2L1199.59 759.6M1201.07 759.6L1204.57 733.2L1206.37 759.6M1207.85 759.6L1211.35 733.2L1213.15 759.6M1214.63 759.6L1218.13 733.2L1219.93 759.6M1221.41 759.6L1224.91 733.2L1226.71 759.6M1228.19 759.6L1231.69 733.2L1233.49 759.6M1234.97 759.6L1238.47 733.2L1240.27 759.6M1241.75 759.6L1245.25 733.2L1247.05 759.6M1248.53 759.6L1252.03 733.2L1253.83 759.6M1255.31 759.6L1258.81 733.2L1260.61 759.6M1262.09 759.6L1265.59 733.2L1267.39 759.6M1268.87 759.6L1272.37 733.2L1274.17 759.6M1275.65 759.6L1279.15 733.2L1280.95 759.6M1282.43 759.6L1285.93 733.2L1287.73 759.6M1289.21 759.6L1292.71 733.2L1294.51 759.6M1295.99 759.6L1299.49 733.2L1301.29 759.6M1302.77 759.6L1306.27 733.2L1308.07 759.6M1309.55 759.6L1313.05 733.2L1314.85 759.6M1316.33 759.6L1319.83 733.2L1321.30 759.6M1321.30 759.6L1321.30 733.2L1321.30 759.6" fill="none" stroke="#ff8560" stroke-width="1.150" stroke-linejoin="round"/>
<path d="M460.10 730H462.40L462.00 760H460.50zM466.88 730H469.18L468.78 760H467.28zM473.66 730H475.96L475.56 760H474.06zM480.44 730H482.74L482.34 760H480.84zM487.22 730H489.52L489.12 760H487.62zM494.00 730H496.30L495.90 760H494.40zM500.78 730H503.08L502.68 760H501.18zM507.56 730H509.86L509.46 760H507.96zM514.34 730H516.64L516.24 760H514.74zM521.12 730H523.42L523.02 760H521.52zM527.90 730H530.20L529.80 760H528.30zM534.68 730H536.98L536.58 760H535.08zM541.46 730H543.76L543.36 760H541.86zM548.24 730H550.54L550.14 760H548.64zM555.02 730H557.32L556.92 760H555.42zM561.80 730H564.10L563.70 760H562.20zM568.58 730H570.88L570.48 760H568.98zM575.36 730H577.66L577.26 760H575.76zM582.14 730H584.44L584.04 760H582.54zM588.92 730H591.22L590.82 760H589.32zM595.70 730H598.00L597.60 760H596.10zM602.48 730H604.78L604.38 760H602.88zM609.26 730H611.56L611.16 760H609.66zM616.04 730H618.34L617.94 760H616.44zM622.82 730H625.12L624.72 760H623.22zM629.60 730H631.90L631.50 760H630.00zM636.38 730H638.68L638.28 760H636.78zM643.16 730H645.46L645.06 760H643.56zM649.94 730H652.24L651.84 760H650.34zM656.72 730H659.02L658.62 760H657.12zM663.50 730H665.80L665.40 760H663.90zM670.28 730H672.58L672.18 760H670.68zM677.06 730H679.36L678.96 760H677.46zM683.84 730H686.14L685.74 760H684.24zM690.62 730H692.92L692.52 760H691.02zM697.40 730H699.70L699.30 760H697.80zM704.18 730H706.48L706.08 760H704.58zM710.96 730H713.26L712.86 760H711.36zM717.74 730H720.04L719.64 760H718.14zM724.52 730H726.82L726.42 760H724.92zM731.30 730H733.60L733.20 760H731.70zM738.08 730H740.38L739.98 760H738.48zM744.86 730H747.16L746.76 760H745.26zM751.64 730H753.94L753.54 760H752.04zM758.42 730H760.72L760.32 760H758.82zM765.20 730H767.50L767.10 760H765.60zM771.98 730H774.28L773.88 760H772.38zM778.76 730H781.06L780.66 760H779.16zM785.54 730H787.84L787.44 760H785.94zM792.32 730H794.62L794.22 760H792.72zM799.10 730H801.40L801.00 760H799.50zM805.88 730H808.18L807.78 760H806.28zM812.66 730H814.96L814.56 760H813.06zM819.44 730H821.74L821.34 760H819.84zM826.22 730H828.52L828.12 760H826.62zM833.00 730H835.30L834.90 760H833.40zM839.78 730H842.08L841.68 760H840.18zM846.56 730H848.86L848.46 760H846.96zM853.34 730H855.64L855.24 760H853.74zM860.12 730H862.42L862.02 760H860.52zM866.90 730H869.20L868.80 760H867.30zM873.68 730H875.98L875.58 760H874.08zM880.46 730H882.76L882.36 760H880.86zM887.24 730H889.54L889.14 760H887.64zM894.02 730H896.32L895.92 760H894.42zM900.80 730H903.10L902.70 760H901.20zM907.58 730H909.88L909.48 760H907.98zM914.36 730H916.66L916.26 760H914.76zM921.14 730H923.44L923.04 760H921.54zM927.92 730H930.22L929.82 760H928.32zM934.70 730H937.00L936.60 760H935.10zM941.48 730H943.78L943.38 760H941.88zM948.26 730H950.56L950.16 760H948.66zM955.04 730H957.34L956.94 760H955.44zM961.82 730H964.12L963.72 760H962.22zM968.60 730H970.90L970.50 760H969.00zM975.38 730H977.68L977.28 760H975.78zM982.16 730H984.46L984.06 760H982.56zM988.94 730H991.24L990.84 760H989.34zM995.72 730H998.02L997.62 760H996.12zM1002.50 730H1004.80L1004.40 760H1002.90zM1009.28 730H1011.58L1011.18 760H1009.68zM1016.06 730H1018.36L1017.96 760H1016.46zM1022.84 730H1025.14L1024.74 760H1023.24zM1029.62 730H1031.92L1031.52 760H1030.02zM1036.40 730H1038.70L1038.30 760H1036.80zM1043.18 730H1045.48L1045.08 760H1043.58zM1049.96 730H1052.26L1051.86 760H1050.36zM1056.74 730H1059.04L1058.64 760H1057.14zM1063.52 730H1065.82L1065.42 760H1063.92zM1070.30 730H1072.60L1072.20 760H1070.70zM1077.08 730H1079.38L1078.98 760H1077.48zM1083.86 730H1086.16L1085.76 760H1084.26zM1090.64 730H1092.94L1092.54 760H1091.04zM1097.42 730H1099.72L1099.32 760H1097.82zM1104.20 730H1106.50L1106.10 760H1104.60zM1110.98 730H1113.28L1112.88 760H1111.38zM1117.76 730H1120.06L1119.66 760H1118.16zM1124.54 730H1126.84L1126.44 760H1124.94zM1131.32 730H1133.62L1133.22 760H1131.72zM1138.10 730H1140.40L1140.00 760H1138.50zM1144.88 730H1147.18L1146.78 760H1145.28zM1151.66 730H1153.96L1153.56 760H1152.06zM1158.44 730H1160.74L1160.34 760H1158.84zM1165.22 730H1167.52L1167.12 760H1165.62zM1172.00 730H1174.30L1173.90 760H1172.40zM1178.78 730H1181.08L1180.68 760H1179.18zM1185.56 730H1187.86L1187.46 760H1185.96zM1192.34 730H1194.64L1194.24 760H1192.74zM1199.12 730H1201.42L1201.02 760H1199.52zM1205.90 730H1208.20L1207.80 760H1206.30zM1212.68 730H1214.98L1214.58 760H1213.08zM1219.46 730H1221.76L1221.36 760H1219.86zM1226.24 730H1228.54L1228.14 760H1226.64zM1233.02 730H1235.32L1234.92 760H1233.42zM1239.80 730H1242.10L1241.70 760H1240.20zM1246.58 730H1248.88L1248.48 760H1246.98zM1253.36 730H1255.66L1255.26 760H1253.76zM1260.14 730H1262.44L1262.04 760H1260.54zM1266.92 730H1269.22L1268.82 760H1267.32zM1273.70 730H1276.00L1275.60 760H1274.10zM1280.48 730H1282.78L1282.38 760H1280.88zM1287.26 730H1289.56L1289.16 760H1287.66zM1294.04 730H1296.34L1295.94 760H1294.44zM1300.82 730H1303.12L1302.72 760H1301.22zM1307.60 730H1309.90L1309.50 760H1308.00zM1314.38 730H1316.68L1316.28 760H1314.78zM1321.16 730H1321.30L1321.30 760H1321.30z" fill="#6fac52"/>
<path d="M460 730.600H1321.800" stroke="#72ae55" stroke-width="1.500"/>
<path d="M460 760.200H1321.800" stroke="#ececec" stroke-width="1.300"/>
<path d="M460.500 740V759.500" stroke="#c8701a" stroke-width="1"/>
<path d="M1321.200 730V759.500" stroke="#6fac52" stroke-width="1.400"/>
<rect x="1259.200" y="729.600" width="7.900" height="42.400" rx="3.800" fill="#fff" stroke="#2a2a2a" stroke-width="1"/>
<rect x="1259.600" y="737" width="7.100" height="17.200" fill="#1e1e1e"/>
<path d="M1261.800 736.800L1263.300 731.800L1264.800 736.800z" fill="#ff5a14"/>
<path d="M1259.700 760.200H1266.600" stroke="#999" stroke-width="1"/>
<path d="M1262.100 763V768.700M1264.200 763V768.700" stroke="#888" stroke-width=".9"/>
<path d="M459.500 773.700H1322" stroke="#8c8c8c" stroke-width="1.600"/>
<path d="M549.3 773.500v4.700" stroke="#8c8c8c" stroke-width="1.200"/>
<path d="M669.5 773.500v4.700" stroke="#8c8c8c" stroke-width="1.200"/>
<path d="M789.7 773.500v4.700" stroke="#8c8c8c" stroke-width="1.200"/>
<path d="M910.0 773.500v4.700" stroke="#8c8c8c" stroke-width="1.200"/>
<path d="M1030.2 773.500v4.700" stroke="#8c8c8c" stroke-width="1.200"/>
<path d="M1150.4 773.500v4.700" stroke="#8c8c8c" stroke-width="1.200"/>
<path d="M1270.6 773.500v4.700" stroke="#8c8c8c" stroke-width="1.200"/>
<path d="M460.5 773.500v4.700" stroke="#8c8c8c" stroke-width="1.200"/>
<path d="M1321.5 773.500v4.700" stroke="#8c8c8c" stroke-width="1.200"/></svg>
<div class="a" style="left:460.00px;top:798.40px;width:244.00px;height:23.60px;background:#fff;border:1px solid #dddddd;box-sizing:border-box;border-radius:3px;"></div>
<div class="a" style="left:492.80px;top:799.50px;width:1px;height:22.00px;background:#dddddd"></div>
<div class="a" style="left:529.50px;top:799.50px;width:1px;height:22.00px;background:#dddddd"></div>
<div class="a" style="left:564.80px;top:799.50px;width:1px;height:22.00px;background:#dddddd"></div>
<div class="a" style="left:599.50px;top:799.50px;width:1px;height:22.00px;background:#dddddd"></div>
<div class="a" style="left:635.20px;top:799.50px;width:1px;height:22.00px;background:#dddddd"></div>
<div class="a" style="left:666.50px;top:799.50px;width:1px;height:22.00px;background:#dddddd"></div>
<div class="a" style="left:720.50px;top:798.40px;width:104.00px;height:23.60px;background:#f0f5fb;border:1px solid #dde3ea;box-sizing:border-box;border-radius:3px;"></div>
<div class="a" style="left:800.70px;top:798.40px;width:23.80px;height:23.60px;background:#ffffff;border:1px solid #dddddd;box-sizing:border-box;border-radius:0 3px 3px 0;"></div>
<svg class="a" style="left:785.50px;top:808.00px" width="8" height="4.5" viewBox="0 0 8 4.5"><path d="M0 4.300H8L4 0z" fill="#a0a0a0"/></svg>
<svg class="a" style="left:807.30px;top:805.30px" width="11" height="9.5" viewBox="0 0 12 10"><rect x=".6" y=".6" width="10.800" height="8.800" rx="1" fill="none" stroke="#555" stroke-width="1" /><path d="M2.500 3.500V2.500H3.500M8.500 2.500H9.500V3.500M9.500 6.500V7.500H8.500M3.500 7.500H2.500V6.500" fill="none" stroke="#555" stroke-width=".8"/></svg>
<div id="tx">
<span class="t" id="t0" style="left:95.00px;top:45.80px;font-size:14.5px;line-height:18.5px;font-weight:700;color:#101b60;transform:scaleX(0.9295);">Trend<i class="b"></i></span>
<span class="t" id="t1" style="left:131.90px;top:45.80px;font-size:14.5px;line-height:18.5px;font-weight:400;color:#27307a;transform:scaleX(1.0147);">Hub<i class="b"></i></span>
<span class="t" id="t2" style="left:245.90px;top:45.60px;font-size:15px;line-height:19px;font-weight:400;color:#1462b5;transform:scaleX(0.9163);">Search tags &amp; attributes<i class="b"></i></span>
<span class="t" id="t3" style="left:840.00px;top:45.00px;font-size:15px;line-height:19px;font-weight:400;color:#1a63b5;transform:scaleX(0.9321);">Home<i class="b"></i></span>
<span class="t" id="t4" style="left:901.70px;top:45.00px;font-size:15px;line-height:19px;font-weight:400;color:#222222;transform:scaleX(0.9267);">Work organizer<i class="b"></i></span>
<span class="t" id="t5" style="left:1020.00px;top:45.00px;font-size:15px;line-height:19px;font-weight:400;color:#222222;transform:scaleX(0.9751);">Monitoring<i class="b"></i></span>
<span class="t" id="t6" style="left:1229.40px;top:47.20px;font-size:12.5px;line-height:16.5px;font-weight:700;color:#ffffff;transform:scaleX(0.9412);">NA<i class="b"></i></span>
<span class="t" id="t7" style="left:1263.50px;top:45.00px;font-size:15px;line-height:19px;font-weight:400;color:#222222;transform:scaleX(0.9271);">Nicky<i class="b"></i></span>
<span class="t" id="t8" style="left:468.00px;top:92.70px;font-size:15px;line-height:19px;font-weight:400;color:#222222;transform:scaleX(0.9098);">Statistics<i class="b"></i></span>
<span class="t" id="t9" style="left:579.60px;top:92.70px;font-size:15px;line-height:19px;font-weight:400;color:#222222;transform:scaleX(0.8973);">Compare layers<i class="b"></i></span>
<span class="t" id="t10" style="left:839.00px;top:92.70px;font-size:15px;line-height:19px;font-weight:700;color:#222222;transform:scaleX(0.8926);">My View name<i class="b"></i></span>
<span class="t" id="t11" style="left:935.30px;top:92.70px;font-size:15px;line-height:19px;font-weight:400;color:#a8a8a8;transform:scaleX(0.8874);">- Unsaved changes<i class="b"></i></span>
<span class="t" id="t12" style="left:1249.20px;top:92.70px;font-size:15px;line-height:19px;font-weight:400;color:#222222;transform:scaleX(0.9227);">Actions<i class="b"></i></span>
<span class="t" id="t13" style="left:122.30px;top:93.10px;font-size:14px;line-height:18px;font-weight:700;color:#222222;transform:scaleX(0.9409);">TAGS &amp; ATTRIBUTES<i class="b"></i></span>
<span class="t" id="t14" style="left:141.00px;top:139.80px;font-size:14px;line-height:18px;font-weight:700;color:#222222;transform:scaleX(0.9544);">ACTIVE<i class="b"></i></span>
<span class="t" id="t15" style="left:123.30px;top:186.10px;font-size:15px;line-height:19px;font-weight:400;color:#222222;transform:scaleX(0.8833);">GROUP 1<i class="b"></i></span>
<span class="t" id="t16" style="left:139.30px;top:233.50px;font-size:15px;line-height:19px;font-weight:400;color:#222222;transform:scaleX(0.8898);">BA:TEMP.1<i class="b"></i></span>
<span class="t" id="t17" style="left:123.30px;top:253.90px;font-size:13px;line-height:17px;font-weight:400;color:#9a9a9a;transform:scaleX(0.8951);">Temperature Reactor 1<i class="b"></i></span>
<span class="t" id="t18" style="left:139.30px;top:297.50px;font-size:15px;line-height:19px;font-weight:400;color:#222222;transform:scaleX(0.9065);">BA:CONC.1<i class="b"></i></span>
<span class="t" id="t19" style="left:123.30px;top:317.90px;font-size:13px;line-height:17px;font-weight:400;color:#9a9a9a;transform:scaleX(0.9062);">Concentration Reactor 1<i class="b"></i></span>
<span class="t" id="t20" style="left:139.30px;top:361.90px;font-size:15px;line-height:19px;font-weight:400;color:#222222;transform:scaleX(0.8756);">Level<i class="b"></i></span>
<span class="t" id="t21" style="left:123.30px;top:382.30px;font-size:13px;line-height:17px;font-weight:400;color:#9a9a9a;transform:scaleX(0.8853);">Reactor1<i class="b"></i></span>
<span class="t" id="t22" style="left:139.30px;top:424.30px;font-size:15px;line-height:19px;font-weight:400;color:#222222;transform:scaleX(0.8803);">ACTIVE<i class="b"></i></span>
<span class="t" id="t23" style="left:123.30px;top:444.10px;font-size:13px;line-height:17px;font-weight:400;color:#9a9a9a;transform:scaleX(0.9016);">This attribute uses parameter su… titutions.<i class="b"></i></span>
<span class="t" id="t24" style="left:123.30px;top:460.50px;font-size:13px;line-height:17px;font-weight:400;color:#9a9a9a;transform:scaleX(0.8853);">Reactor1<i class="b"></i></span>
<span class="t" id="t25" style="left:141.00px;top:535.30px;font-size:14px;line-height:18px;font-weight:700;color:#222222;transform:scaleX(0.9194);">RECENTLY USED<i class="b"></i></span>
<span class="t" id="t26" style="left:139.30px;top:583.30px;font-size:15px;line-height:19px;font-weight:400;color:#222222;transform:scaleX(0.8461);">Phase<i class="b"></i></span>
<span class="t" id="t27" style="left:123.30px;top:602.00px;font-size:13px;line-height:17px;font-weight:400;color:#9a9a9a;transform:scaleX(0.8853);">Reactor1<i class="b"></i></span>
<span class="t" id="t28" style="left:521.30px;top:146.10px;font-size:10.5px;line-height:14.5px;font-weight:400;color:#333333;transform:scaleX(0.9103);">BA:TEMP.1<i class="b"></i></span>
<span class="t" id="t29" style="left:643.00px;top:146.10px;font-size:10.5px;line-height:14.5px;font-weight:400;color:#333333;transform:scaleX(0.9239);">BA:CONC.1<i class="b"></i></span>
<span class="t" id="t30" style="left:859.30px;top:146.10px;font-size:10.5px;line-height:14.5px;font-weight:400;color:#333333;transform:scaleX(0.8921);">Level<i class="b"></i></span>
<span class="t" id="t31" style="left:1129.40px;top:146.10px;font-size:10.5px;line-height:14.5px;font-weight:400;color:#333333;transform:scaleX(0.9068);">ACTIVE<i class="b"></i></span>
<span class="t" id="t32" style="left:445.50px;top:655.10px;font-size:10px;line-height:14px;font-weight:400;color:#333;transform:scaleX(0.9888);">0<i class="b"></i></span>
<span class="t" id="t33" style="left:439.90px;top:563.10px;font-size:10px;line-height:14px;font-weight:400;color:#333;transform:scaleX(0.9978);">10<i class="b"></i></span>
<span class="t" id="t34" style="left:439.90px;top:471.10px;font-size:10px;line-height:14px;font-weight:400;color:#333;transform:scaleX(0.9978);">20<i class="b"></i></span>
<span class="t" id="t35" style="left:439.90px;top:379.10px;font-size:10px;line-height:14px;font-weight:400;color:#333;transform:scaleX(0.9978);">30<i class="b"></i></span>
<span class="t" id="t36" style="left:439.90px;top:287.10px;font-size:10px;line-height:14px;font-weight:400;color:#333;transform:scaleX(0.9978);">40<i class="b"></i></span>
<span class="t" id="t37" style="left:439.90px;top:195.10px;font-size:10px;line-height:14px;font-weight:400;color:#333;transform:scaleX(0.9978);">50<i class="b"></i></span>
<span class="t" id="t38" style="left:439.90px;top:167.50px;font-size:10px;line-height:14px;font-weight:400;color:#333;transform:scaleX(0.9978);">53<i class="b"></i></span>
<span class="t" id="t39" style="left:879.90px;top:656.30px;font-size:10px;line-height:14px;font-weight:400;color:#333;transform:scaleX(0.9905);background:#fff;padding:0 1px;margin-left:-1px;line-height:12px;">0<i class="b"></i></span>
<span class="t" id="t40" style="left:879.90px;top:540.80px;font-size:10px;line-height:14px;font-weight:400;color:#333;transform:scaleX(0.9897);background:#fff;padding:0 1px;margin-left:-1px;line-height:12px;">10<i class="b"></i></span>
<span class="t" id="t41" style="left:879.90px;top:425.30px;font-size:10px;line-height:14px;font-weight:400;color:#333;transform:scaleX(0.9897);background:#fff;padding:0 1px;margin-left:-1px;line-height:12px;">20<i class="b"></i></span>
<span class="t" id="t42" style="left:879.90px;top:309.80px;font-size:10px;line-height:14px;font-weight:400;color:#333;transform:scaleX(0.9897);background:#fff;padding:0 1px;margin-left:-1px;line-height:12px;">30<i class="b"></i></span>
<span class="t" id="t43" style="left:879.90px;top:194.30px;font-size:10px;line-height:14px;font-weight:400;color:#333;transform:scaleX(0.9897);background:#fff;padding:0 1px;margin-left:-1px;line-height:12px;">40<i class="b"></i></span>
<span class="t" id="t44" style="left:879.90px;top:167.74px;font-size:10px;line-height:14px;font-weight:400;color:#333;transform:scaleX(0.9771);background:#fff;padding:0 1px;margin-left:-1px;line-height:12px;">42.3<i class="b"></i></span>
<span class="t" id="t45" style="left:1103.50px;top:168.30px;font-size:10px;line-height:14px;font-weight:400;color:#333;transform:scaleX(0.9364);background:#fff;padding:0 2px;margin-left:-2px;line-height:12px;">ACTIVE<i class="b"></i></span>
<span class="t" id="t46" style="left:1092.60px;top:656.30px;font-size:10px;line-height:14px;font-weight:400;color:#333;transform:scaleX(0.9683);background:#fff;padding:0 2px;margin-left:-2px;line-height:12px;">INACTIVE<i class="b"></i></span>
<span class="t" id="t47" style="left:460.10px;top:669.80px;font-size:10px;line-height:14px;font-weight:400;color:#444;transform:scaleX(1.0067);">09:50<i class="b"></i></span>
<span class="t" id="t48" style="left:512.60px;top:669.80px;font-size:10px;line-height:14px;font-weight:400;color:#444;transform:scaleX(1.0067);">09:55<i class="b"></i></span>
<span class="t" id="t49" style="left:563.45px;top:669.80px;font-size:10px;line-height:14px;font-weight:400;color:#444;transform:scaleX(0.9859);">10 PM<i class="b"></i></span>
<span class="t" id="t50" style="left:617.60px;top:669.80px;font-size:10px;line-height:14px;font-weight:400;color:#444;transform:scaleX(1.0067);">10:05<i class="b"></i></span>
<span class="t" id="t51" style="left:670.10px;top:669.80px;font-size:10px;line-height:14px;font-weight:400;color:#444;transform:scaleX(1.0067);">10:10<i class="b"></i></span>
<span class="t" id="t52" style="left:722.60px;top:669.80px;font-size:10px;line-height:14px;font-weight:400;color:#444;transform:scaleX(1.0067);">10:15<i class="b"></i></span>
<span class="t" id="t53" style="left:775.10px;top:669.80px;font-size:10px;line-height:14px;font-weight:400;color:#444;transform:scaleX(1.0067);">10:20<i class="b"></i></span>
<span class="t" id="t54" style="left:827.60px;top:669.80px;font-size:10px;line-height:14px;font-weight:400;color:#444;transform:scaleX(1.0067);">10:25<i class="b"></i></span>
<span class="t" id="t55" style="left:880.10px;top:669.80px;font-size:10px;line-height:14px;font-weight:400;color:#444;transform:scaleX(1.0067);">10:30<i class="b"></i></span>
<span class="t" id="t56" style="left:932.60px;top:669.80px;font-size:10px;line-height:14px;font-weight:400;color:#444;transform:scaleX(1.0067);">10:35<i class="b"></i></span>
<span class="t" id="t57" style="left:985.10px;top:669.80px;font-size:10px;line-height:14px;font-weight:400;color:#444;transform:scaleX(1.0067);">10:40<i class="b"></i></span>
<span class="t" id="t58" style="left:1037.60px;top:669.80px;font-size:10px;line-height:14px;font-weight:400;color:#444;transform:scaleX(1.0067);">10:45<i class="b"></i></span>
<span class="t" id="t59" style="left:1090.10px;top:669.80px;font-size:10px;line-height:14px;font-weight:400;color:#444;transform:scaleX(1.0067);">10:50<i class="b"></i></span>
<span class="t" id="t60" style="left:1142.60px;top:669.80px;font-size:10px;line-height:14px;font-weight:400;color:#444;transform:scaleX(1.0067);">10:55<i class="b"></i></span>
<span class="t" id="t61" style="left:1193.45px;top:669.80px;font-size:10px;line-height:14px;font-weight:400;color:#444;transform:scaleX(1.0116);">11 PM<i class="b"></i></span>
<span class="t" id="t62" style="left:1247.60px;top:669.80px;font-size:10px;line-height:14px;font-weight:400;color:#444;transform:scaleX(1.0372);">11:05<i class="b"></i></span>
<span class="t" id="t63" style="left:1300.10px;top:669.80px;font-size:10px;line-height:14px;font-weight:400;color:#444;transform:scaleX(1.0372);">11:10<i class="b"></i></span>
<span class="t" id="t64" style="left:901.70px;top:371.90px;font-size:16.5px;line-height:20.5px;font-weight:700;color:#5c10ff;transform:scaleX(0.8767);">Y-axis reveals by clicking label<i class="b"></i></span>
<span class="t" id="t65" style="left:849.70px;top:696.60px;font-size:15px;line-height:19px;font-weight:400;color:#222222;transform:scaleX(0.9320);">± 1 hour<i class="b"></i></span>
<span class="t" id="t66" style="left:531.30px;top:777.00px;font-size:11px;line-height:15px;font-weight:400;color:#444;transform:scaleX(0.8828);">Wed, 16<i class="b"></i></span>
<span class="t" id="t67" style="left:653.00px;top:777.00px;font-size:11px;line-height:15px;font-weight:400;color:#444;transform:scaleX(0.8844);">Thu, 17<i class="b"></i></span>
<span class="t" id="t68" style="left:776.20px;top:777.00px;font-size:11px;line-height:15px;font-weight:400;color:#444;transform:scaleX(0.8657);">Fri, 18<i class="b"></i></span>
<span class="t" id="t69" style="left:895.00px;top:777.00px;font-size:11px;line-height:15px;font-weight:400;color:#444;transform:scaleX(0.8606);">Sat, 19<i class="b"></i></span>
<span class="t" id="t70" style="left:1014.95px;top:777.00px;font-size:11px;line-height:15px;font-weight:400;color:#444;transform:scaleX(0.8905);">Feb 20<i class="b"></i></span>
<span class="t" id="t71" style="left:1132.15px;top:777.00px;font-size:11px;line-height:15px;font-weight:400;color:#444;transform:scaleX(0.9182);">Mon, 21<i class="b"></i></span>
<span class="t" id="t72" style="left:1254.60px;top:777.00px;font-size:11px;line-height:15px;font-weight:400;color:#444;transform:scaleX(0.8671);">Tue, 22<i class="b"></i></span>
<span class="t" id="t73" style="left:469.30px;top:802.20px;font-size:13px;line-height:17px;font-weight:400;color:#333;transform:scaleX(0.9023);">1D<i class="b"></i></span>
<span class="t" id="t74" style="left:502.20px;top:802.20px;font-size:13px;line-height:17px;font-weight:400;color:#333;transform:scaleX(0.9744);">1W<i class="b"></i></span>
<span class="t" id="t75" style="left:538.45px;top:802.20px;font-size:13px;line-height:17px;font-weight:400;color:#333;transform:scaleX(1.0242);">1M<i class="b"></i></span>
<span class="t" id="t76" style="left:573.45px;top:802.20px;font-size:13px;line-height:17px;font-weight:400;color:#333;transform:scaleX(1.0242);">3M<i class="b"></i></span>
<span class="t" id="t77" style="left:608.55px;top:802.20px;font-size:13px;line-height:17px;font-weight:400;color:#333;transform:scaleX(1.0242);">6M<i class="b"></i></span>
<span class="t" id="t78" style="left:643.55px;top:802.20px;font-size:13px;line-height:17px;font-weight:400;color:#333;transform:scaleX(0.9745);">1Y<i class="b"></i></span>
<span class="t" id="t79" style="left:675.25px;top:802.20px;font-size:13px;line-height:17px;font-weight:400;color:#333;transform:scaleX(0.8859);">ALL<i class="b"></i></span>
<span class="t" id="t80" style="left:730.00px;top:802.20px;font-size:13px;line-height:17px;font-weight:400;color:#1a63b5;transform:scaleX(0.9000);">CUSTOM<i class="b"></i></span>
</div>
</body></html>
